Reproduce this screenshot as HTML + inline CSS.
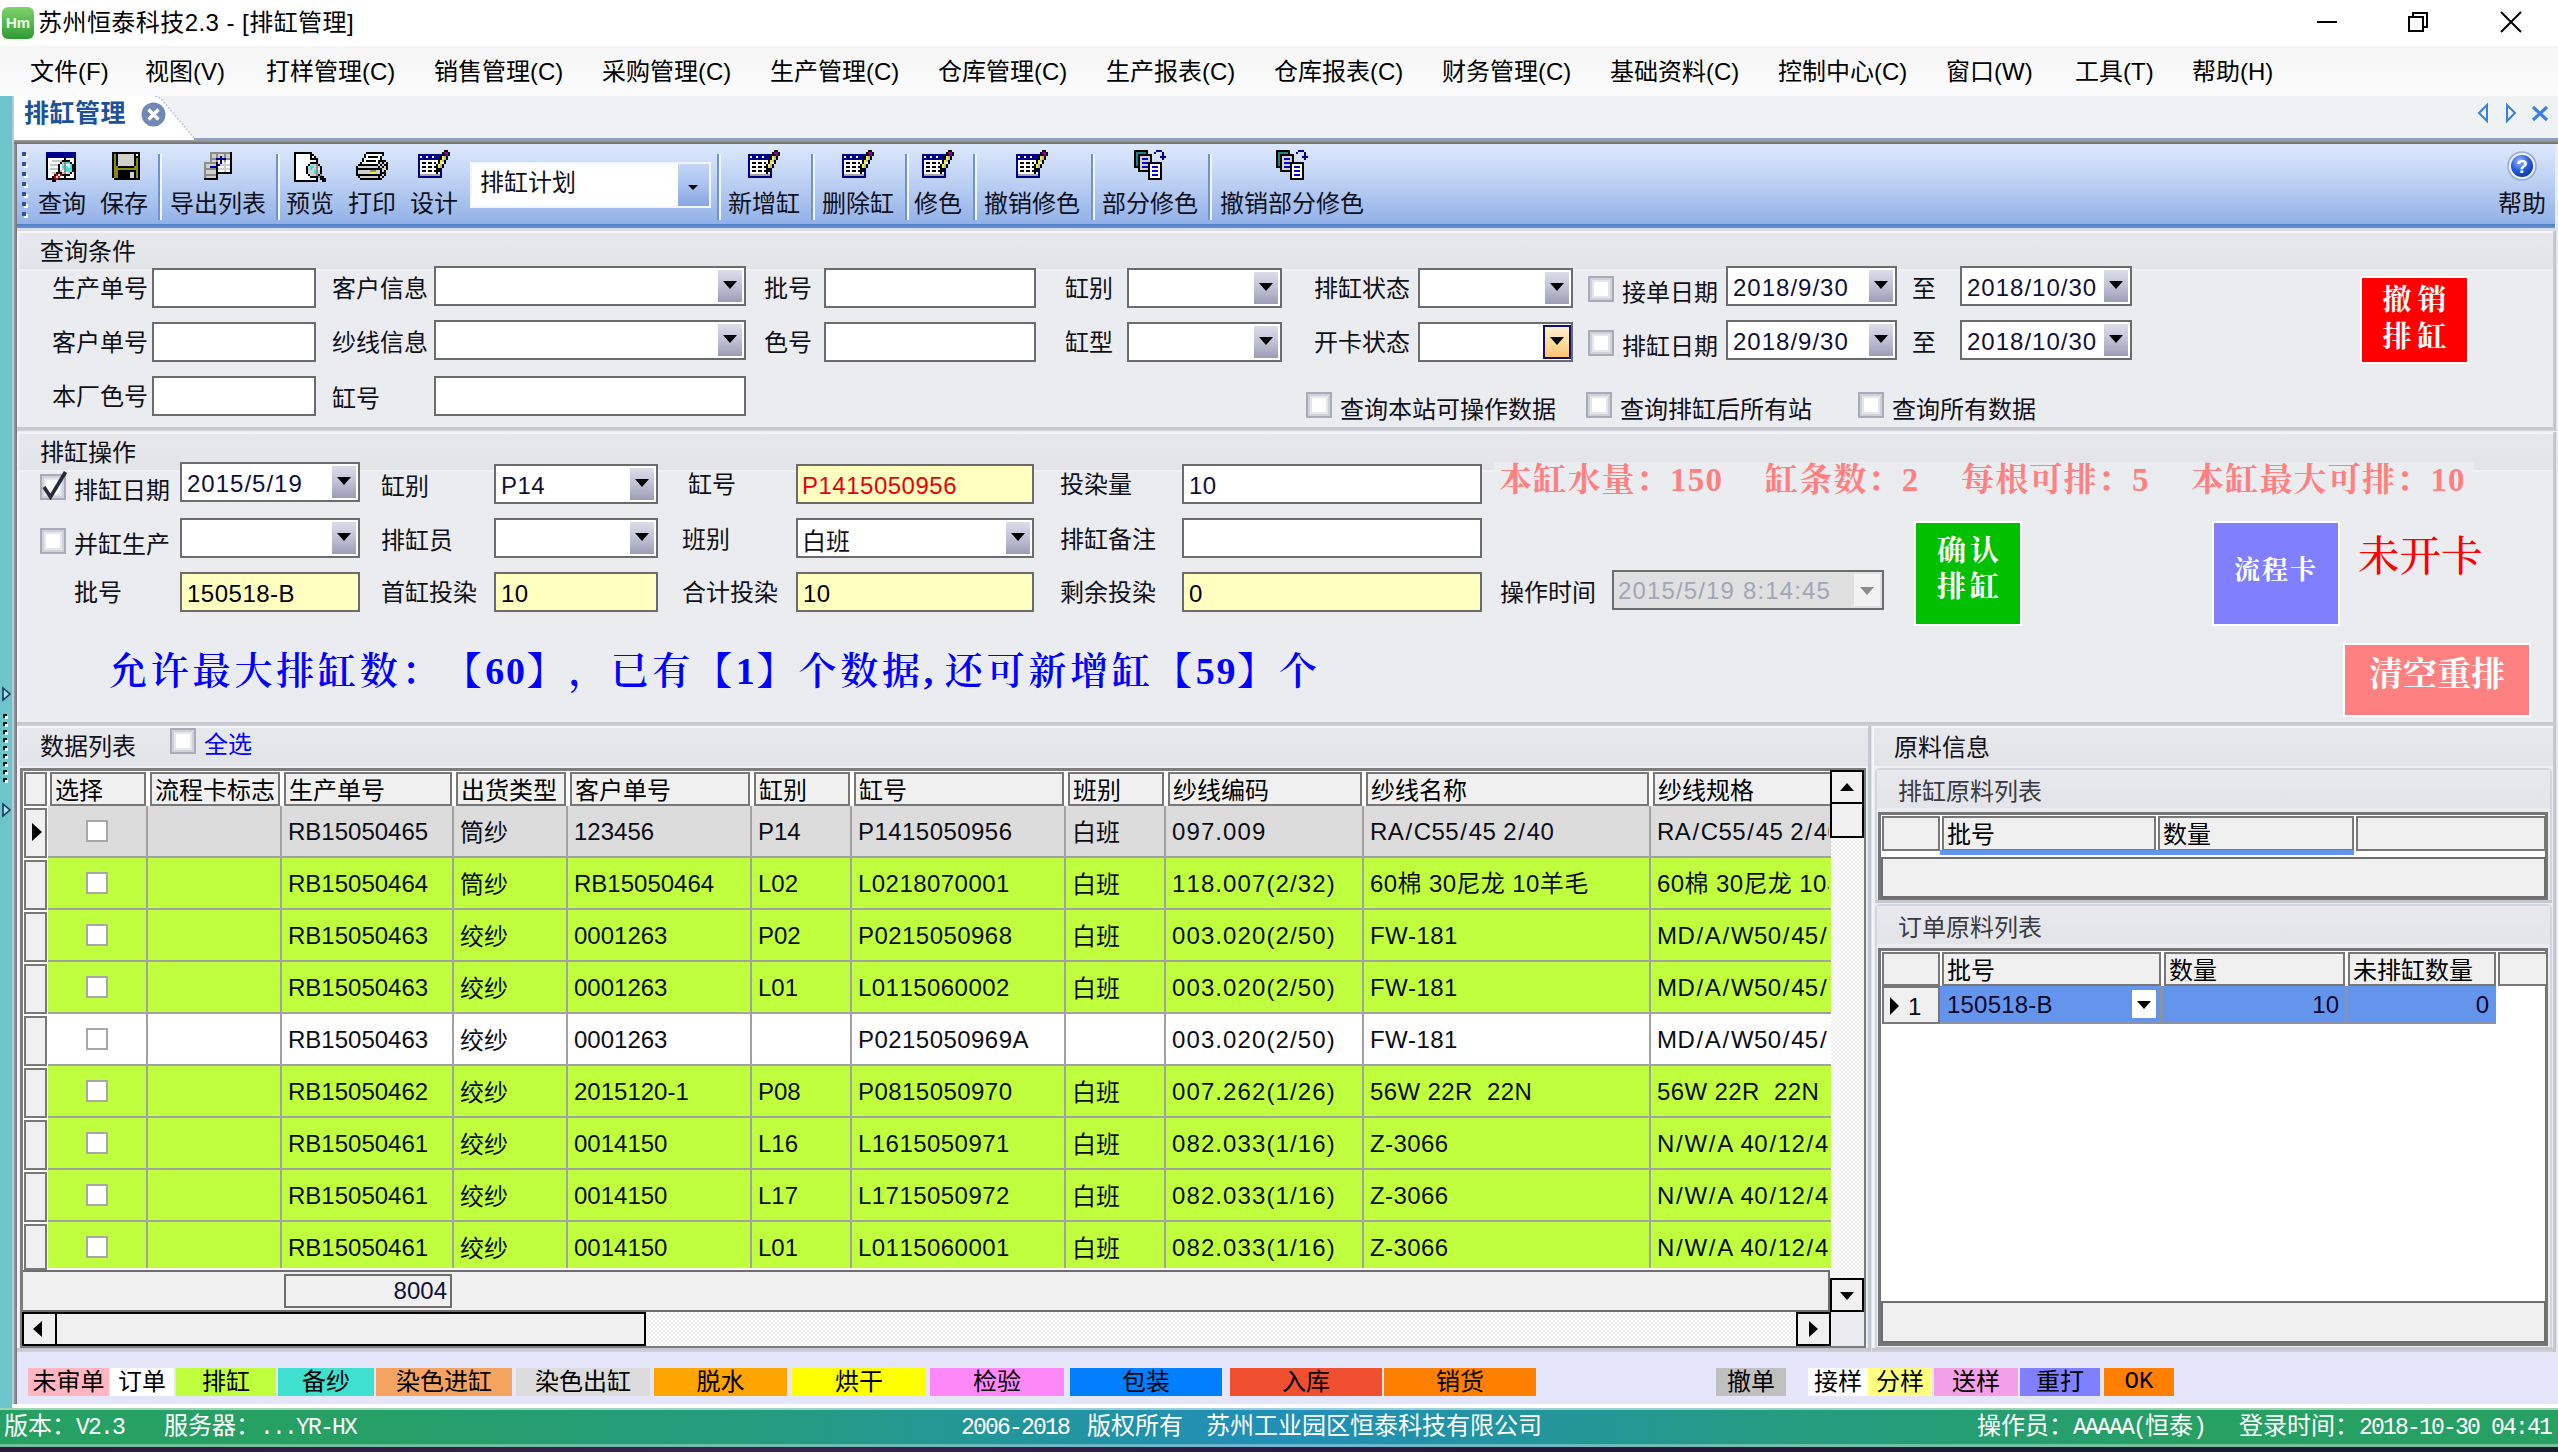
<!DOCTYPE html><html lang="zh-CN"><head><meta charset="utf-8"><title>排缸管理</title><style>
html,body{margin:0;padding:0}
body{width:2558px;height:1452px;position:relative;overflow:hidden;background:#ebecf0;
 font-family:"Liberation Sans","Noto Sans CJK SC",sans-serif;font-size:24px;color:#000;line-height:1;text-spacing-trim:space-all;font-kerning:none}
div,span,svg{position:absolute;box-sizing:border-box}
.t{white-space:pre;line-height:28px;height:28px;font-size:24px;color:#10101c}
.m{white-space:pre;line-height:28px;font-size:24px;color:#000}
.inp{background:#fff;border:2px solid #6c6c6c}
.yel{background:#ffffc0;border:2px solid #6c6c6c}
.cb{background:#fff;border:2px solid #a9acb8;box-shadow:inset 0 0 0 2px #cfd2da,inset 0 0 0 4px #e4e6ec}
.btn{background:linear-gradient(#dcdce9,#c4c4d8 45%,#9c9cb6);}
.arr{width:0;height:0;border-left:7px solid transparent;border-right:7px solid transparent;border-top:8px solid #000}
.v{white-space:pre;font-size:24px;line-height:28px;color:#10103a;letter-spacing:0.5px}
.hd{background:#f0f0f0;border:2px solid #777;}
.ht{white-space:pre;font-size:24px;line-height:28px;color:#000;margin-top:1px}
.c{white-space:pre;font-size:24px;line-height:28px;color:#0c0c14}
.lg{white-space:pre;font-size:24px;line-height:28px;text-align:center;color:#000}
.st{white-space:pre;font-size:24px;line-height:28px;color:#fff;margin-top:1px;font-family:"Liberation Mono","Noto Sans CJK SC",monospace}
.sep{width:3px;background:linear-gradient(90deg,#7f9bd0 0,#7f9bd0 1px,#eef4ff 1px,#eef4ff 3px)}
.tl{white-space:pre;font-size:24px;line-height:28px;color:#101018;margin-top:1px}
</style></head><body>
<div style="left:0px;top:0px;width:2558px;height:46px;background:#fff"></div>
<svg style="left:2px;top:7px" width="32" height="32" viewBox="0 0 32 32"><defs><linearGradient id="gi" x1="0" y1="0" x2="0" y2="1"><stop offset="0" stop-color="#7fd36b"/><stop offset="1" stop-color="#2f9a33"/></linearGradient></defs><rect x="0" y="0" width="32" height="32" rx="6" fill="url(#gi)"/><text x="16" y="21" font-family="Liberation Sans,sans-serif" font-size="15" font-weight="bold" text-anchor="middle" fill="#e8ffe6">Hm</text></svg>
<span class="m" style="left:38px;top:9px;font-size:24px;color:#000;letter-spacing:0.45px">苏州恒泰科技2.3 - [排缸管理]</span>
<div style="left:2317px;top:21px;width:20px;height:2px;background:#000"></div>
<svg style="left:2406px;top:10px" width="24" height="24" viewBox="0 0 24 24" fill="none" stroke="#000" stroke-width="2"><rect x="3" y="7" width="14" height="14"/><path d="M7 7V3h14v14h-4"/></svg>
<svg style="left:2500px;top:11px" width="22" height="22" viewBox="0 0 22 22" stroke="#000" stroke-width="2"><path d="M1 1L21 21M21 1L1 21"/></svg>
<div style="left:0px;top:46px;width:2558px;height:50px;background:linear-gradient(#f6f6f6,#fbfbfb)"></div>
<span class="m" style="left:30px;top:58px;">文件(F)</span>
<span class="m" style="left:145px;top:58px;">视图(V)</span>
<span class="m" style="left:266px;top:58px;">打样管理(C)</span>
<span class="m" style="left:434px;top:58px;">销售管理(C)</span>
<span class="m" style="left:602px;top:58px;">采购管理(C)</span>
<span class="m" style="left:770px;top:58px;">生产管理(C)</span>
<span class="m" style="left:938px;top:58px;">仓库管理(C)</span>
<span class="m" style="left:1106px;top:58px;">生产报表(C)</span>
<span class="m" style="left:1274px;top:58px;">仓库报表(C)</span>
<span class="m" style="left:1442px;top:58px;">财务管理(C)</span>
<span class="m" style="left:1610px;top:58px;">基础资料(C)</span>
<span class="m" style="left:1778px;top:58px;">控制中心(C)</span>
<span class="m" style="left:1946px;top:58px;">窗口(W)</span>
<span class="m" style="left:2075px;top:58px;">工具(T)</span>
<span class="m" style="left:2192px;top:58px;">帮助(H)</span>
<div style="left:0px;top:96px;width:2558px;height:44px;background:#eef2f3"></div>
<div style="left:0px;top:96px;width:12px;height:1312px;background:#6cc5ca"></div>
<div style="left:12px;top:96px;width:2px;height:1310px;background:#b4cdd6"></div>
<div style="left:14px;top:140px;width:3px;height:1264px;background:linear-gradient(90deg,#9a9aa2,#74747c)"></div>
<div style="left:12px;top:1404px;width:2546px;height:4px;background:#fff"></div>
<div style="left:192px;top:138px;width:2366px;height:2px;background:#8c9fc4"></div>
<svg style="left:14px;top:96px" width="190" height="46" viewBox="0 0 190 46"><path d="M0 44V0H141Q145 0 148 4L180 42V44Z" fill="#fff"/><path d="M141 0.5Q145 0.5 148 4L180 42" fill="none" stroke="#c3cbd9" stroke-width="1.6" stroke-dasharray="2 1.5"/></svg>
<span class="m" style="left:24px;top:99px;font-weight:bold;color:#1c5398;font-size:25px;letter-spacing:0.5px">排缸管理</span>
<svg style="left:141px;top:102px" width="25" height="25" viewBox="0 0 25 25"><circle cx="12.5" cy="12.5" r="12" fill="#7187b5"/><path d="M7.5 7.5L17.5 17.5M17.5 7.5L7.5 17.5" stroke="#fff" stroke-width="3.4"/></svg>
<svg style="left:2476px;top:102px" width="76" height="22" viewBox="0 0 76 22" fill="none" stroke="#3c7fdc" stroke-width="2"><path d="M11 3L3 11L11 19Z"/><path d="M31 3L39 11L31 19Z"/><path d="M57 5L71 18M71 5L57 18" stroke-width="3.2"/></svg>
<div style="left:14px;top:140px;width:2544px;height:4px;background:linear-gradient(#a4a4a6,#8a8a8c 40%,#6c6c6e)"></div>
<div style="left:17px;top:144px;width:2538px;height:82px;background:linear-gradient(#dce8fc 0%,#c5d7f6 35%,#a9c2ee 70%,#8fafe6 100%)"></div>
<div style="left:17px;top:224px;width:2538px;height:4px;background:linear-gradient(#4f7cc4,#6c94d6)"></div>
<div style="left:17px;top:228px;width:2541px;height:3px;background:#d9dde6"></div>
<div style="left:24px;top:154px;width:4px;height:4px;background:#f4f8ff"></div>
<div style="left:22px;top:152px;width:4px;height:4px;background:#34509a"></div>
<div style="left:24px;top:164px;width:4px;height:4px;background:#f4f8ff"></div>
<div style="left:22px;top:162px;width:4px;height:4px;background:#34509a"></div>
<div style="left:24px;top:174px;width:4px;height:4px;background:#f4f8ff"></div>
<div style="left:22px;top:172px;width:4px;height:4px;background:#34509a"></div>
<div style="left:24px;top:184px;width:4px;height:4px;background:#f4f8ff"></div>
<div style="left:22px;top:182px;width:4px;height:4px;background:#34509a"></div>
<div style="left:24px;top:194px;width:4px;height:4px;background:#f4f8ff"></div>
<div style="left:22px;top:192px;width:4px;height:4px;background:#34509a"></div>
<div style="left:24px;top:204px;width:4px;height:4px;background:#f4f8ff"></div>
<div style="left:22px;top:202px;width:4px;height:4px;background:#34509a"></div>
<div style="left:24px;top:214px;width:4px;height:4px;background:#f4f8ff"></div>
<div style="left:22px;top:212px;width:4px;height:4px;background:#34509a"></div>
<svg style="left:46px;top:152px" width="30" height="30" viewBox="0 0 30 30" shape-rendering="crispEdges" ><rect x="0" y="0" width="30" height="2" fill="#00008b"/><rect x="0" y="2" width="30" height="2" fill="#00008b"/><rect x="0" y="4" width="30" height="2" fill="#00008b"/><rect x="0" y="6" width="2" height="2" fill="#000"/><rect x="2" y="6" width="16" height="2" fill="#fff"/><rect x="18" y="6" width="2" height="2" fill="#000"/><rect x="20" y="6" width="8" height="2" fill="#fff"/><rect x="28" y="6" width="2" height="2" fill="#000"/><rect x="0" y="8" width="2" height="2" fill="#000"/><rect x="2" y="8" width="4" height="2" fill="#fff"/><rect x="6" y="8" width="10" height="2" fill="#c4c4c4"/><rect x="16" y="8" width="8" height="2" fill="#000"/><rect x="24" y="8" width="4" height="2" fill="#fff"/><rect x="28" y="8" width="2" height="2" fill="#000"/><rect x="0" y="10" width="2" height="2" fill="#000"/><rect x="2" y="10" width="12" height="2" fill="#fff"/><rect x="14" y="10" width="2" height="2" fill="#000"/><rect x="16" y="10" width="2" height="2" fill="#c4c4c4"/><rect x="18" y="10" width="2" height="2" fill="#8c8c8c"/><rect x="20" y="10" width="4" height="2" fill="#30e4e8"/><rect x="24" y="10" width="2" height="2" fill="#000"/><rect x="26" y="10" width="2" height="2" fill="#fff"/><rect x="28" y="10" width="2" height="2" fill="#000"/><rect x="0" y="12" width="2" height="2" fill="#000"/><rect x="2" y="12" width="2" height="2" fill="#fff"/><rect x="4" y="12" width="8" height="2" fill="#c4c4c4"/><rect x="12" y="12" width="2" height="2" fill="#000"/><rect x="14" y="12" width="2" height="2" fill="#fff"/><rect x="16" y="12" width="2" height="2" fill="#c4c4c4"/><rect x="18" y="12" width="2" height="2" fill="#8c8c8c"/><rect x="20" y="12" width="4" height="2" fill="#fff"/><rect x="24" y="12" width="2" height="2" fill="#30e4e8"/><rect x="26" y="12" width="4" height="2" fill="#000"/><rect x="0" y="14" width="2" height="2" fill="#000"/><rect x="2" y="14" width="10" height="2" fill="#fff"/><rect x="12" y="14" width="2" height="2" fill="#000"/><rect x="14" y="14" width="2" height="2" fill="#fff"/><rect x="16" y="14" width="2" height="2" fill="#30e4e8"/><rect x="18" y="14" width="2" height="2" fill="#8c8c8c"/><rect x="20" y="14" width="2" height="2" fill="#30e4e8"/><rect x="22" y="14" width="2" height="2" fill="#fff"/><rect x="24" y="14" width="2" height="2" fill="#30e4e8"/><rect x="26" y="14" width="4" height="2" fill="#000"/><rect x="0" y="16" width="2" height="2" fill="#000"/><rect x="2" y="16" width="2" height="2" fill="#fff"/><rect x="4" y="16" width="8" height="2" fill="#c4c4c4"/><rect x="12" y="16" width="2" height="2" fill="#000"/><rect x="14" y="16" width="2" height="2" fill="#fff"/><rect x="16" y="16" width="2" height="2" fill="#c4c4c4"/><rect x="18" y="16" width="2" height="2" fill="#8c8c8c"/><rect x="20" y="16" width="6" height="2" fill="#30e4e8"/><rect x="26" y="16" width="4" height="2" fill="#000"/><rect x="0" y="18" width="2" height="2" fill="#000"/><rect x="2" y="18" width="10" height="2" fill="#fff"/><rect x="12" y="18" width="2" height="2" fill="#000"/><rect x="14" y="18" width="2" height="2" fill="#c4c4c4"/><rect x="16" y="18" width="2" height="2" fill="#fff"/><rect x="18" y="18" width="2" height="2" fill="#8c8c8c"/><rect x="20" y="18" width="4" height="2" fill="#30e4e8"/><rect x="24" y="18" width="2" height="2" fill="#c4c4c4"/><rect x="26" y="18" width="4" height="2" fill="#000"/><rect x="0" y="20" width="2" height="2" fill="#000"/><rect x="2" y="20" width="4" height="2" fill="#fff"/><rect x="6" y="20" width="4" height="2" fill="#c4c4c4"/><rect x="10" y="20" width="2" height="2" fill="#000"/><rect x="12" y="20" width="2" height="2" fill="#7a0000"/><rect x="14" y="20" width="2" height="2" fill="#000"/><rect x="16" y="20" width="2" height="2" fill="#c4c4c4"/><rect x="18" y="20" width="2" height="2" fill="#8c8c8c"/><rect x="20" y="20" width="2" height="2" fill="#fff"/><rect x="22" y="20" width="2" height="2" fill="#c4c4c4"/><rect x="24" y="20" width="2" height="2" fill="#000"/><rect x="26" y="20" width="2" height="2" fill="#fff"/><rect x="28" y="20" width="2" height="2" fill="#000"/><rect x="0" y="22" width="2" height="2" fill="#000"/><rect x="2" y="22" width="6" height="2" fill="#fff"/><rect x="8" y="22" width="2" height="2" fill="#000"/><rect x="10" y="22" width="2" height="2" fill="#e00000"/><rect x="12" y="22" width="2" height="2" fill="#fff"/><rect x="14" y="22" width="2" height="2" fill="#e00000"/><rect x="16" y="22" width="8" height="2" fill="#000"/><rect x="24" y="22" width="4" height="2" fill="#fff"/><rect x="28" y="22" width="2" height="2" fill="#000"/><rect x="0" y="24" width="2" height="2" fill="#000"/><rect x="2" y="24" width="4" height="2" fill="#fff"/><rect x="6" y="24" width="2" height="2" fill="#000"/><rect x="8" y="24" width="2" height="2" fill="#e00000"/><rect x="10" y="24" width="2" height="2" fill="#fff"/><rect x="12" y="24" width="2" height="2" fill="#e00000"/><rect x="14" y="24" width="4" height="2" fill="#fff"/><rect x="18" y="24" width="2" height="2" fill="#000"/><rect x="20" y="24" width="8" height="2" fill="#fff"/><rect x="28" y="24" width="2" height="2" fill="#000"/><rect x="0" y="26" width="8" height="2" fill="#000"/><rect x="8" y="26" width="2" height="2" fill="#7a0000"/><rect x="10" y="26" width="2" height="2" fill="#e00000"/><rect x="12" y="26" width="18" height="2" fill="#000"/><rect x="6" y="28" width="4" height="2" fill="#000"/></svg>
<span class="tl" style="left:38px;top:188.5px;color:#10101c">查询</span>
<svg style="left:112px;top:152px" width="28" height="28" viewBox="0 0 28 28" shape-rendering="crispEdges" ><rect x="0" y="0" width="28" height="2" fill="#000"/><rect x="0" y="2" width="2" height="2" fill="#000"/><rect x="2" y="2" width="2" height="2" fill="#8a8a12"/><rect x="4" y="2" width="2" height="2" fill="#000"/><rect x="6" y="2" width="16" height="2" fill="#d2d0cc"/><rect x="22" y="2" width="2" height="2" fill="#000"/><rect x="24" y="2" width="2" height="2" fill="#fff"/><rect x="26" y="2" width="2" height="2" fill="#000"/><rect x="0" y="4" width="2" height="2" fill="#000"/><rect x="2" y="4" width="2" height="2" fill="#8a8a12"/><rect x="4" y="4" width="2" height="2" fill="#000"/><rect x="6" y="4" width="16" height="2" fill="#d2d0cc"/><rect x="22" y="4" width="6" height="2" fill="#000"/><rect x="0" y="6" width="2" height="2" fill="#000"/><rect x="2" y="6" width="2" height="2" fill="#8a8a12"/><rect x="4" y="6" width="2" height="2" fill="#000"/><rect x="6" y="6" width="16" height="2" fill="#d2d0cc"/><rect x="22" y="6" width="2" height="2" fill="#000"/><rect x="24" y="6" width="2" height="2" fill="#8a8a12"/><rect x="26" y="6" width="2" height="2" fill="#000"/><rect x="0" y="8" width="2" height="2" fill="#000"/><rect x="2" y="8" width="2" height="2" fill="#8a8a12"/><rect x="4" y="8" width="2" height="2" fill="#000"/><rect x="6" y="8" width="16" height="2" fill="#d2d0cc"/><rect x="22" y="8" width="2" height="2" fill="#000"/><rect x="24" y="8" width="2" height="2" fill="#8a8a12"/><rect x="26" y="8" width="2" height="2" fill="#000"/><rect x="0" y="10" width="2" height="2" fill="#000"/><rect x="2" y="10" width="2" height="2" fill="#8a8a12"/><rect x="4" y="10" width="2" height="2" fill="#000"/><rect x="6" y="10" width="16" height="2" fill="#d2d0cc"/><rect x="22" y="10" width="2" height="2" fill="#000"/><rect x="24" y="10" width="2" height="2" fill="#8a8a12"/><rect x="26" y="10" width="2" height="2" fill="#000"/><rect x="0" y="12" width="2" height="2" fill="#000"/><rect x="2" y="12" width="2" height="2" fill="#8a8a12"/><rect x="4" y="12" width="2" height="2" fill="#000"/><rect x="6" y="12" width="16" height="2" fill="#d2d0cc"/><rect x="22" y="12" width="2" height="2" fill="#000"/><rect x="24" y="12" width="2" height="2" fill="#8a8a12"/><rect x="26" y="12" width="2" height="2" fill="#000"/><rect x="0" y="14" width="2" height="2" fill="#000"/><rect x="2" y="14" width="4" height="2" fill="#8a8a12"/><rect x="6" y="14" width="16" height="2" fill="#000"/><rect x="22" y="14" width="4" height="2" fill="#8a8a12"/><rect x="26" y="14" width="2" height="2" fill="#000"/><rect x="0" y="16" width="2" height="2" fill="#000"/><rect x="2" y="16" width="24" height="2" fill="#8a8a12"/><rect x="26" y="16" width="2" height="2" fill="#000"/><rect x="0" y="18" width="2" height="2" fill="#000"/><rect x="2" y="18" width="4" height="2" fill="#8a8a12"/><rect x="6" y="18" width="18" height="2" fill="#000"/><rect x="24" y="18" width="2" height="2" fill="#8a8a12"/><rect x="26" y="18" width="2" height="2" fill="#000"/><rect x="0" y="20" width="2" height="2" fill="#000"/><rect x="2" y="20" width="4" height="2" fill="#8a8a12"/><rect x="6" y="20" width="12" height="2" fill="#000"/><rect x="18" y="20" width="4" height="2" fill="#d2d0cc"/><rect x="22" y="20" width="2" height="2" fill="#000"/><rect x="24" y="20" width="2" height="2" fill="#8a8a12"/><rect x="26" y="20" width="2" height="2" fill="#000"/><rect x="0" y="22" width="2" height="2" fill="#000"/><rect x="2" y="22" width="4" height="2" fill="#8a8a12"/><rect x="6" y="22" width="12" height="2" fill="#000"/><rect x="18" y="22" width="4" height="2" fill="#d2d0cc"/><rect x="22" y="22" width="2" height="2" fill="#000"/><rect x="24" y="22" width="2" height="2" fill="#8a8a12"/><rect x="26" y="22" width="2" height="2" fill="#000"/><rect x="0" y="24" width="2" height="2" fill="#000"/><rect x="2" y="24" width="4" height="2" fill="#8a8a12"/><rect x="6" y="24" width="12" height="2" fill="#000"/><rect x="18" y="24" width="4" height="2" fill="#d2d0cc"/><rect x="22" y="24" width="2" height="2" fill="#000"/><rect x="24" y="24" width="2" height="2" fill="#8a8a12"/><rect x="26" y="24" width="2" height="2" fill="#000"/><rect x="2" y="26" width="26" height="2" fill="#000"/></svg>
<span class="tl" style="left:100px;top:188.5px;color:#10101c">保存</span>
<div style="left:158px;top:154px;width:4px;height:66px;background:linear-gradient(90deg,#6f92d2 0,#6f92d2 2px,#f2f6ff 2px,#f2f6ff 4px)"></div>
<svg style="left:204px;top:152px" width="28" height="28" viewBox="0 0 28 28" shape-rendering="crispEdges" ><rect x="6" y="0" width="20" height="2" fill="#8c8c8c"/><rect x="26" y="0" width="2" height="2" fill="#000"/><rect x="6" y="2" width="2" height="2" fill="#8c8c8c"/><rect x="8" y="2" width="4" height="2" fill="#d2d0cc"/><rect x="12" y="2" width="2" height="2" fill="#8c8c8c"/><rect x="14" y="2" width="6" height="2" fill="#d2d0cc"/><rect x="20" y="2" width="2" height="2" fill="#8c8c8c"/><rect x="22" y="2" width="4" height="2" fill="#d2d0cc"/><rect x="26" y="2" width="2" height="2" fill="#000"/><rect x="6" y="4" width="2" height="2" fill="#8c8c8c"/><rect x="8" y="4" width="4" height="2" fill="#d2d0cc"/><rect x="12" y="4" width="2" height="2" fill="#8c8c8c"/><rect x="14" y="4" width="2" height="2" fill="#d2d0cc"/><rect x="16" y="4" width="2" height="2" fill="#00008b"/><rect x="18" y="4" width="2" height="2" fill="#d2d0cc"/><rect x="20" y="4" width="2" height="2" fill="#8c8c8c"/><rect x="22" y="4" width="4" height="2" fill="#d2d0cc"/><rect x="26" y="4" width="2" height="2" fill="#000"/><rect x="6" y="6" width="6" height="2" fill="#8c8c8c"/><rect x="12" y="6" width="10" height="2" fill="#00008b"/><rect x="22" y="6" width="4" height="2" fill="#8c8c8c"/><rect x="26" y="6" width="2" height="2" fill="#000"/><rect x="6" y="8" width="2" height="2" fill="#8c8c8c"/><rect x="8" y="8" width="4" height="2" fill="#d2d0cc"/><rect x="12" y="8" width="2" height="2" fill="#8c8c8c"/><rect x="14" y="8" width="2" height="2" fill="#fff"/><rect x="16" y="8" width="2" height="2" fill="#00008b"/><rect x="18" y="8" width="2" height="2" fill="#fff"/><rect x="20" y="8" width="2" height="2" fill="#8c8c8c"/><rect x="22" y="8" width="4" height="2" fill="#fff"/><rect x="26" y="8" width="2" height="2" fill="#000"/><rect x="0" y="10" width="12" height="2" fill="#8c8c8c"/><rect x="12" y="10" width="2" height="2" fill="#000"/><rect x="14" y="10" width="2" height="2" fill="#fff"/><rect x="16" y="10" width="2" height="2" fill="#00008b"/><rect x="18" y="10" width="2" height="2" fill="#fff"/><rect x="20" y="10" width="2" height="2" fill="#d2d0cc"/><rect x="22" y="10" width="4" height="2" fill="#fff"/><rect x="26" y="10" width="2" height="2" fill="#000"/><rect x="0" y="12" width="2" height="2" fill="#8c8c8c"/><rect x="2" y="12" width="10" height="2" fill="#d2d0cc"/><rect x="12" y="12" width="2" height="2" fill="#000"/><rect x="14" y="12" width="2" height="2" fill="#00008b"/><rect x="16" y="12" width="10" height="2" fill="#d2d0cc"/><rect x="26" y="12" width="2" height="2" fill="#000"/><rect x="0" y="14" width="2" height="2" fill="#8c8c8c"/><rect x="2" y="14" width="4" height="2" fill="#d2d0cc"/><rect x="6" y="14" width="8" height="2" fill="#00008b"/><rect x="14" y="14" width="6" height="2" fill="#fff"/><rect x="20" y="14" width="2" height="2" fill="#d2d0cc"/><rect x="22" y="14" width="4" height="2" fill="#fff"/><rect x="26" y="14" width="2" height="2" fill="#000"/><rect x="0" y="16" width="12" height="2" fill="#8c8c8c"/><rect x="12" y="16" width="2" height="2" fill="#000"/><rect x="14" y="16" width="12" height="2" fill="#d2d0cc"/><rect x="26" y="16" width="2" height="2" fill="#000"/><rect x="0" y="18" width="2" height="2" fill="#8c8c8c"/><rect x="2" y="18" width="10" height="2" fill="#d2d0cc"/><rect x="12" y="18" width="2" height="2" fill="#000"/><rect x="14" y="18" width="6" height="2" fill="#fff"/><rect x="20" y="18" width="2" height="2" fill="#d2d0cc"/><rect x="22" y="18" width="4" height="2" fill="#fff"/><rect x="26" y="18" width="2" height="2" fill="#000"/><rect x="0" y="20" width="2" height="2" fill="#8c8c8c"/><rect x="2" y="20" width="10" height="2" fill="#d2d0cc"/><rect x="12" y="20" width="16" height="2" fill="#000"/><rect x="0" y="22" width="12" height="2" fill="#8c8c8c"/><rect x="12" y="22" width="2" height="2" fill="#000"/><rect x="0" y="24" width="2" height="2" fill="#8c8c8c"/><rect x="2" y="24" width="10" height="2" fill="#d2d0cc"/><rect x="12" y="24" width="2" height="2" fill="#000"/><rect x="0" y="26" width="14" height="2" fill="#000"/></svg>
<span class="tl" style="left:170px;top:188.5px;color:#10101c">导出列表</span>
<div style="left:276px;top:154px;width:4px;height:66px;background:linear-gradient(90deg,#6f92d2 0,#6f92d2 2px,#f2f6ff 2px,#f2f6ff 4px)"></div>
<svg style="left:294px;top:152px" width="32" height="30" viewBox="0 0 32 30" shape-rendering="crispEdges" ><rect x="0" y="0" width="18" height="2" fill="#000"/><rect x="0" y="2" width="2" height="2" fill="#000"/><rect x="2" y="2" width="14" height="2" fill="#fff"/><rect x="16" y="2" width="4" height="2" fill="#000"/><rect x="0" y="4" width="2" height="2" fill="#000"/><rect x="2" y="4" width="14" height="2" fill="#fff"/><rect x="16" y="4" width="2" height="2" fill="#000"/><rect x="18" y="4" width="2" height="2" fill="#fff"/><rect x="20" y="4" width="2" height="2" fill="#000"/><rect x="0" y="6" width="2" height="2" fill="#000"/><rect x="2" y="6" width="14" height="2" fill="#fff"/><rect x="16" y="6" width="8" height="2" fill="#000"/><rect x="0" y="8" width="2" height="2" fill="#000"/><rect x="2" y="8" width="20" height="2" fill="#fff"/><rect x="22" y="8" width="2" height="2" fill="#000"/><rect x="0" y="10" width="2" height="2" fill="#000"/><rect x="2" y="10" width="14" height="2" fill="#fff"/><rect x="16" y="10" width="8" height="2" fill="#000"/><rect x="0" y="12" width="2" height="2" fill="#000"/><rect x="2" y="12" width="12" height="2" fill="#fff"/><rect x="14" y="12" width="2" height="2" fill="#000"/><rect x="16" y="12" width="6" height="2" fill="#d2d0cc"/><rect x="22" y="12" width="2" height="2" fill="#8c8c8c"/><rect x="24" y="12" width="2" height="2" fill="#000"/><rect x="0" y="14" width="2" height="2" fill="#000"/><rect x="2" y="14" width="10" height="2" fill="#fff"/><rect x="12" y="14" width="2" height="2" fill="#000"/><rect x="14" y="14" width="2" height="2" fill="#d2d0cc"/><rect x="16" y="14" width="4" height="2" fill="#30e4e8"/><rect x="20" y="14" width="2" height="2" fill="#d2d0cc"/><rect x="22" y="14" width="2" height="2" fill="#8c8c8c"/><rect x="24" y="14" width="2" height="2" fill="#d2d0cc"/><rect x="26" y="14" width="2" height="2" fill="#000"/><rect x="0" y="16" width="2" height="2" fill="#000"/><rect x="2" y="16" width="10" height="2" fill="#fff"/><rect x="12" y="16" width="2" height="2" fill="#000"/><rect x="14" y="16" width="2" height="2" fill="#d2d0cc"/><rect x="16" y="16" width="2" height="2" fill="#30e4e8"/><rect x="18" y="16" width="4" height="2" fill="#d2d0cc"/><rect x="22" y="16" width="2" height="2" fill="#8c8c8c"/><rect x="24" y="16" width="2" height="2" fill="#fff"/><rect x="26" y="16" width="2" height="2" fill="#000"/><rect x="0" y="18" width="2" height="2" fill="#000"/><rect x="2" y="18" width="10" height="2" fill="#fff"/><rect x="12" y="18" width="2" height="2" fill="#000"/><rect x="14" y="18" width="6" height="2" fill="#d2d0cc"/><rect x="20" y="18" width="2" height="2" fill="#30e4e8"/><rect x="22" y="18" width="2" height="2" fill="#8c8c8c"/><rect x="24" y="18" width="2" height="2" fill="#d2d0cc"/><rect x="26" y="18" width="2" height="2" fill="#000"/><rect x="0" y="20" width="2" height="2" fill="#000"/><rect x="2" y="20" width="10" height="2" fill="#fff"/><rect x="12" y="20" width="2" height="2" fill="#000"/><rect x="14" y="20" width="6" height="2" fill="#d2d0cc"/><rect x="20" y="20" width="2" height="2" fill="#30e4e8"/><rect x="22" y="20" width="2" height="2" fill="#8c8c8c"/><rect x="24" y="20" width="2" height="2" fill="#d2d0cc"/><rect x="26" y="20" width="2" height="2" fill="#000"/><rect x="0" y="22" width="2" height="2" fill="#000"/><rect x="2" y="22" width="12" height="2" fill="#fff"/><rect x="14" y="22" width="2" height="2" fill="#000"/><rect x="16" y="22" width="6" height="2" fill="#d2d0cc"/><rect x="22" y="22" width="2" height="2" fill="#8c8c8c"/><rect x="24" y="22" width="2" height="2" fill="#000"/><rect x="26" y="22" width="2" height="2" fill="#8c8c8c"/><rect x="0" y="24" width="2" height="2" fill="#000"/><rect x="2" y="24" width="14" height="2" fill="#fff"/><rect x="16" y="24" width="8" height="2" fill="#000"/><rect x="24" y="24" width="2" height="2" fill="#8c8c8c"/><rect x="26" y="24" width="4" height="2" fill="#000"/><rect x="0" y="26" width="2" height="2" fill="#000"/><rect x="2" y="26" width="20" height="2" fill="#fff"/><rect x="22" y="26" width="2" height="2" fill="#000"/><rect x="26" y="26" width="6" height="2" fill="#000"/><rect x="0" y="28" width="24" height="2" fill="#000"/><rect x="28" y="28" width="4" height="2" fill="#000"/></svg>
<span class="tl" style="left:286px;top:188.5px;color:#10101c">预览</span>
<svg style="left:356px;top:152px" width="32" height="28" viewBox="0 0 32 28" shape-rendering="crispEdges" ><rect x="10" y="0" width="18" height="2" fill="#000"/><rect x="8" y="2" width="2" height="2" fill="#000"/><rect x="10" y="2" width="16" height="2" fill="#fff"/><rect x="26" y="2" width="2" height="2" fill="#000"/><rect x="8" y="4" width="2" height="2" fill="#000"/><rect x="10" y="4" width="2" height="2" fill="#fff"/><rect x="12" y="4" width="10" height="2" fill="#000"/><rect x="22" y="4" width="2" height="2" fill="#fff"/><rect x="24" y="4" width="2" height="2" fill="#000"/><rect x="6" y="6" width="2" height="2" fill="#000"/><rect x="8" y="6" width="16" height="2" fill="#fff"/><rect x="24" y="6" width="2" height="2" fill="#000"/><rect x="6" y="8" width="2" height="2" fill="#000"/><rect x="8" y="8" width="2" height="2" fill="#fff"/><rect x="10" y="8" width="10" height="2" fill="#000"/><rect x="20" y="8" width="2" height="2" fill="#fff"/><rect x="22" y="8" width="8" height="2" fill="#000"/><rect x="4" y="10" width="2" height="2" fill="#000"/><rect x="6" y="10" width="16" height="2" fill="#fff"/><rect x="22" y="10" width="2" height="2" fill="#000"/><rect x="24" y="10" width="2" height="2" fill="#d2d0cc"/><rect x="26" y="10" width="2" height="2" fill="#000"/><rect x="28" y="10" width="2" height="2" fill="#d2d0cc"/><rect x="30" y="10" width="2" height="2" fill="#000"/><rect x="2" y="12" width="20" height="2" fill="#000"/><rect x="22" y="12" width="2" height="2" fill="#d2d0cc"/><rect x="24" y="12" width="2" height="2" fill="#000"/><rect x="26" y="12" width="2" height="2" fill="#d2d0cc"/><rect x="28" y="12" width="4" height="2" fill="#000"/><rect x="0" y="14" width="2" height="2" fill="#000"/><rect x="2" y="14" width="20" height="2" fill="#d2d0cc"/><rect x="22" y="14" width="2" height="2" fill="#000"/><rect x="24" y="14" width="2" height="2" fill="#d2d0cc"/><rect x="26" y="14" width="2" height="2" fill="#000"/><rect x="28" y="14" width="2" height="2" fill="#d2d0cc"/><rect x="30" y="14" width="2" height="2" fill="#000"/><rect x="0" y="16" width="26" height="2" fill="#000"/><rect x="26" y="16" width="4" height="2" fill="#d2d0cc"/><rect x="30" y="16" width="2" height="2" fill="#000"/><rect x="0" y="18" width="2" height="2" fill="#000"/><rect x="2" y="18" width="12" height="2" fill="#d2d0cc"/><rect x="14" y="18" width="6" height="2" fill="#8c8c8c"/><rect x="20" y="18" width="4" height="2" fill="#d2d0cc"/><rect x="24" y="18" width="2" height="2" fill="#000"/><rect x="26" y="18" width="2" height="2" fill="#d2d0cc"/><rect x="28" y="18" width="2" height="2" fill="#000"/><rect x="0" y="20" width="2" height="2" fill="#000"/><rect x="2" y="20" width="12" height="2" fill="#d2d0cc"/><rect x="14" y="20" width="6" height="2" fill="#f4f020"/><rect x="20" y="20" width="4" height="2" fill="#d2d0cc"/><rect x="24" y="20" width="6" height="2" fill="#000"/><rect x="0" y="22" width="26" height="2" fill="#000"/><rect x="26" y="22" width="2" height="2" fill="#d2d0cc"/><rect x="28" y="22" width="2" height="2" fill="#000"/><rect x="2" y="24" width="2" height="2" fill="#000"/><rect x="4" y="24" width="18" height="2" fill="#d2d0cc"/><rect x="22" y="24" width="2" height="2" fill="#000"/><rect x="24" y="24" width="2" height="2" fill="#d2d0cc"/><rect x="26" y="24" width="2" height="2" fill="#000"/><rect x="4" y="26" width="22" height="2" fill="#000"/></svg>
<span class="tl" style="left:348px;top:188.5px;color:#10101c">打印</span>
<svg style="left:418px;top:150px" width="32" height="28" viewBox="0 0 32 28" shape-rendering="crispEdges" ><rect x="26" y="0" width="4" height="2" fill="#000"/><rect x="24" y="2" width="2" height="2" fill="#000"/><rect x="26" y="2" width="4" height="2" fill="#900090"/><rect x="30" y="2" width="2" height="2" fill="#000"/><rect x="0" y="4" width="24" height="2" fill="#00008b"/><rect x="24" y="4" width="4" height="2" fill="#000"/><rect x="28" y="4" width="2" height="2" fill="#900090"/><rect x="30" y="4" width="2" height="2" fill="#000"/><rect x="0" y="6" width="2" height="2" fill="#00008b"/><rect x="2" y="6" width="2" height="2" fill="#fff"/><rect x="4" y="6" width="4" height="2" fill="#00008b"/><rect x="8" y="6" width="2" height="2" fill="#fff"/><rect x="10" y="6" width="4" height="2" fill="#00008b"/><rect x="14" y="6" width="2" height="2" fill="#fff"/><rect x="16" y="6" width="6" height="2" fill="#00008b"/><rect x="22" y="6" width="2" height="2" fill="#000"/><rect x="24" y="6" width="2" height="2" fill="#f8f020"/><rect x="26" y="6" width="2" height="2" fill="#b4b4b4"/><rect x="28" y="6" width="2" height="2" fill="#000"/><rect x="0" y="8" width="22" height="2" fill="#00008b"/><rect x="22" y="8" width="2" height="2" fill="#000"/><rect x="24" y="8" width="2" height="2" fill="#f8f020"/><rect x="26" y="8" width="2" height="2" fill="#b4b4b4"/><rect x="28" y="8" width="2" height="2" fill="#000"/><rect x="0" y="10" width="2" height="2" fill="#00008b"/><rect x="2" y="10" width="18" height="2" fill="#fff"/><rect x="20" y="10" width="2" height="2" fill="#000"/><rect x="22" y="10" width="2" height="2" fill="#f8f020"/><rect x="24" y="10" width="2" height="2" fill="#b4b4b4"/><rect x="26" y="10" width="2" height="2" fill="#000"/><rect x="0" y="12" width="2" height="2" fill="#00008b"/><rect x="2" y="12" width="2" height="2" fill="#fff"/><rect x="4" y="12" width="4" height="2" fill="#000"/><rect x="8" y="12" width="2" height="2" fill="#fff"/><rect x="10" y="12" width="4" height="2" fill="#000"/><rect x="14" y="12" width="2" height="2" fill="#fff"/><rect x="16" y="12" width="2" height="2" fill="#000"/><rect x="18" y="12" width="2" height="2" fill="#fff"/><rect x="20" y="12" width="2" height="2" fill="#000"/><rect x="22" y="12" width="2" height="2" fill="#f8f020"/><rect x="24" y="12" width="2" height="2" fill="#fff"/><rect x="26" y="12" width="2" height="2" fill="#000"/><rect x="0" y="14" width="2" height="2" fill="#00008b"/><rect x="2" y="14" width="16" height="2" fill="#fff"/><rect x="18" y="14" width="2" height="2" fill="#000"/><rect x="20" y="14" width="2" height="2" fill="#f8f020"/><rect x="22" y="14" width="2" height="2" fill="#b4b4b4"/><rect x="24" y="14" width="2" height="2" fill="#000"/><rect x="0" y="16" width="2" height="2" fill="#00008b"/><rect x="2" y="16" width="2" height="2" fill="#fff"/><rect x="4" y="16" width="4" height="2" fill="#000"/><rect x="8" y="16" width="2" height="2" fill="#fff"/><rect x="10" y="16" width="4" height="2" fill="#000"/><rect x="14" y="16" width="2" height="2" fill="#fff"/><rect x="16" y="16" width="4" height="2" fill="#000"/><rect x="20" y="16" width="2" height="2" fill="#f8f020"/><rect x="22" y="16" width="2" height="2" fill="#b4b4b4"/><rect x="24" y="16" width="2" height="2" fill="#000"/><rect x="0" y="18" width="2" height="2" fill="#00008b"/><rect x="2" y="18" width="16" height="2" fill="#fff"/><rect x="18" y="18" width="6" height="2" fill="#000"/><rect x="0" y="20" width="2" height="2" fill="#00008b"/><rect x="2" y="20" width="2" height="2" fill="#fff"/><rect x="4" y="20" width="4" height="2" fill="#000"/><rect x="8" y="20" width="2" height="2" fill="#fff"/><rect x="10" y="20" width="4" height="2" fill="#000"/><rect x="14" y="20" width="2" height="2" fill="#fff"/><rect x="16" y="20" width="6" height="2" fill="#000"/><rect x="22" y="20" width="2" height="2" fill="#00008b"/><rect x="0" y="22" width="2" height="2" fill="#00008b"/><rect x="2" y="22" width="16" height="2" fill="#fff"/><rect x="18" y="22" width="2" height="2" fill="#000"/><rect x="20" y="22" width="2" height="2" fill="#fff"/><rect x="22" y="22" width="2" height="2" fill="#00008b"/><rect x="0" y="24" width="2" height="2" fill="#00008b"/><rect x="2" y="24" width="20" height="2" fill="#a4a4a4"/><rect x="22" y="24" width="2" height="2" fill="#00008b"/><rect x="0" y="26" width="24" height="2" fill="#00008b"/></svg>
<span class="tl" style="left:410px;top:188.5px;color:#10101c">设计</span>
<div style="left:470px;top:162px;width:241px;height:46px;background:#fff;border:2px solid #f2f6fd"></div>
<span class="tl" style="left:480px;top:167.5px;color:#10101c">排缸计划</span>
<div style="left:678px;top:164px;width:31px;height:42px;background:linear-gradient(#c4d6f6,#a9c2ef 50%,#86a7e2)"></div>
<div class="arr" style="left:688px;top:185px;width:10px;height:5px;border-left-width:5px;border-right-width:5px;border-top-width:5px"></div>
<div style="left:717px;top:154px;width:4px;height:66px;background:linear-gradient(90deg,#6f92d2 0,#6f92d2 2px,#f2f6ff 2px,#f2f6ff 4px)"></div>
<svg style="left:748px;top:150px" width="32" height="28" viewBox="0 0 32 28" shape-rendering="crispEdges" ><rect x="26" y="0" width="4" height="2" fill="#000"/><rect x="24" y="2" width="2" height="2" fill="#000"/><rect x="26" y="2" width="4" height="2" fill="#900090"/><rect x="30" y="2" width="2" height="2" fill="#000"/><rect x="0" y="4" width="24" height="2" fill="#00008b"/><rect x="24" y="4" width="4" height="2" fill="#000"/><rect x="28" y="4" width="2" height="2" fill="#900090"/><rect x="30" y="4" width="2" height="2" fill="#000"/><rect x="0" y="6" width="2" height="2" fill="#00008b"/><rect x="2" y="6" width="2" height="2" fill="#fff"/><rect x="4" y="6" width="4" height="2" fill="#00008b"/><rect x="8" y="6" width="2" height="2" fill="#fff"/><rect x="10" y="6" width="4" height="2" fill="#00008b"/><rect x="14" y="6" width="2" height="2" fill="#fff"/><rect x="16" y="6" width="6" height="2" fill="#00008b"/><rect x="22" y="6" width="2" height="2" fill="#000"/><rect x="24" y="6" width="2" height="2" fill="#f8f020"/><rect x="26" y="6" width="2" height="2" fill="#b4b4b4"/><rect x="28" y="6" width="2" height="2" fill="#000"/><rect x="0" y="8" width="22" height="2" fill="#00008b"/><rect x="22" y="8" width="2" height="2" fill="#000"/><rect x="24" y="8" width="2" height="2" fill="#f8f020"/><rect x="26" y="8" width="2" height="2" fill="#b4b4b4"/><rect x="28" y="8" width="2" height="2" fill="#000"/><rect x="0" y="10" width="2" height="2" fill="#00008b"/><rect x="2" y="10" width="18" height="2" fill="#fff"/><rect x="20" y="10" width="2" height="2" fill="#000"/><rect x="22" y="10" width="2" height="2" fill="#f8f020"/><rect x="24" y="10" width="2" height="2" fill="#b4b4b4"/><rect x="26" y="10" width="2" height="2" fill="#000"/><rect x="0" y="12" width="2" height="2" fill="#00008b"/><rect x="2" y="12" width="2" height="2" fill="#fff"/><rect x="4" y="12" width="4" height="2" fill="#000"/><rect x="8" y="12" width="2" height="2" fill="#fff"/><rect x="10" y="12" width="4" height="2" fill="#000"/><rect x="14" y="12" width="2" height="2" fill="#fff"/><rect x="16" y="12" width="2" height="2" fill="#000"/><rect x="18" y="12" width="2" height="2" fill="#fff"/><rect x="20" y="12" width="2" height="2" fill="#000"/><rect x="22" y="12" width="2" height="2" fill="#f8f020"/><rect x="24" y="12" width="2" height="2" fill="#fff"/><rect x="26" y="12" width="2" height="2" fill="#000"/><rect x="0" y="14" width="2" height="2" fill="#00008b"/><rect x="2" y="14" width="16" height="2" fill="#fff"/><rect x="18" y="14" width="2" height="2" fill="#000"/><rect x="20" y="14" width="2" height="2" fill="#f8f020"/><rect x="22" y="14" width="2" height="2" fill="#b4b4b4"/><rect x="24" y="14" width="2" height="2" fill="#000"/><rect x="0" y="16" width="2" height="2" fill="#00008b"/><rect x="2" y="16" width="2" height="2" fill="#fff"/><rect x="4" y="16" width="4" height="2" fill="#000"/><rect x="8" y="16" width="2" height="2" fill="#fff"/><rect x="10" y="16" width="4" height="2" fill="#000"/><rect x="14" y="16" width="2" height="2" fill="#fff"/><rect x="16" y="16" width="4" height="2" fill="#000"/><rect x="20" y="16" width="2" height="2" fill="#f8f020"/><rect x="22" y="16" width="2" height="2" fill="#b4b4b4"/><rect x="24" y="16" width="2" height="2" fill="#000"/><rect x="0" y="18" width="2" height="2" fill="#00008b"/><rect x="2" y="18" width="16" height="2" fill="#fff"/><rect x="18" y="18" width="6" height="2" fill="#000"/><rect x="0" y="20" width="2" height="2" fill="#00008b"/><rect x="2" y="20" width="2" height="2" fill="#fff"/><rect x="4" y="20" width="4" height="2" fill="#000"/><rect x="8" y="20" width="2" height="2" fill="#fff"/><rect x="10" y="20" width="4" height="2" fill="#000"/><rect x="14" y="20" width="2" height="2" fill="#fff"/><rect x="16" y="20" width="6" height="2" fill="#000"/><rect x="22" y="20" width="2" height="2" fill="#00008b"/><rect x="0" y="22" width="2" height="2" fill="#00008b"/><rect x="2" y="22" width="16" height="2" fill="#fff"/><rect x="18" y="22" width="2" height="2" fill="#000"/><rect x="20" y="22" width="2" height="2" fill="#fff"/><rect x="22" y="22" width="2" height="2" fill="#00008b"/><rect x="0" y="24" width="2" height="2" fill="#00008b"/><rect x="2" y="24" width="20" height="2" fill="#a4a4a4"/><rect x="22" y="24" width="2" height="2" fill="#00008b"/><rect x="0" y="26" width="24" height="2" fill="#00008b"/></svg>
<span class="tl" style="left:728px;top:188.5px;color:#10101c">新增缸</span>
<div style="left:811px;top:154px;width:4px;height:66px;background:linear-gradient(90deg,#6f92d2 0,#6f92d2 2px,#f2f6ff 2px,#f2f6ff 4px)"></div>
<svg style="left:842px;top:150px" width="32" height="28" viewBox="0 0 32 28" shape-rendering="crispEdges" ><rect x="26" y="0" width="4" height="2" fill="#000"/><rect x="24" y="2" width="2" height="2" fill="#000"/><rect x="26" y="2" width="4" height="2" fill="#900090"/><rect x="30" y="2" width="2" height="2" fill="#000"/><rect x="0" y="4" width="24" height="2" fill="#00008b"/><rect x="24" y="4" width="4" height="2" fill="#000"/><rect x="28" y="4" width="2" height="2" fill="#900090"/><rect x="30" y="4" width="2" height="2" fill="#000"/><rect x="0" y="6" width="2" height="2" fill="#00008b"/><rect x="2" y="6" width="2" height="2" fill="#fff"/><rect x="4" y="6" width="4" height="2" fill="#00008b"/><rect x="8" y="6" width="2" height="2" fill="#fff"/><rect x="10" y="6" width="4" height="2" fill="#00008b"/><rect x="14" y="6" width="2" height="2" fill="#fff"/><rect x="16" y="6" width="6" height="2" fill="#00008b"/><rect x="22" y="6" width="2" height="2" fill="#000"/><rect x="24" y="6" width="2" height="2" fill="#f8f020"/><rect x="26" y="6" width="2" height="2" fill="#b4b4b4"/><rect x="28" y="6" width="2" height="2" fill="#000"/><rect x="0" y="8" width="22" height="2" fill="#00008b"/><rect x="22" y="8" width="2" height="2" fill="#000"/><rect x="24" y="8" width="2" height="2" fill="#f8f020"/><rect x="26" y="8" width="2" height="2" fill="#b4b4b4"/><rect x="28" y="8" width="2" height="2" fill="#000"/><rect x="0" y="10" width="2" height="2" fill="#00008b"/><rect x="2" y="10" width="18" height="2" fill="#fff"/><rect x="20" y="10" width="2" height="2" fill="#000"/><rect x="22" y="10" width="2" height="2" fill="#f8f020"/><rect x="24" y="10" width="2" height="2" fill="#b4b4b4"/><rect x="26" y="10" width="2" height="2" fill="#000"/><rect x="0" y="12" width="2" height="2" fill="#00008b"/><rect x="2" y="12" width="2" height="2" fill="#fff"/><rect x="4" y="12" width="4" height="2" fill="#000"/><rect x="8" y="12" width="2" height="2" fill="#fff"/><rect x="10" y="12" width="4" height="2" fill="#000"/><rect x="14" y="12" width="2" height="2" fill="#fff"/><rect x="16" y="12" width="2" height="2" fill="#000"/><rect x="18" y="12" width="2" height="2" fill="#fff"/><rect x="20" y="12" width="2" height="2" fill="#000"/><rect x="22" y="12" width="2" height="2" fill="#f8f020"/><rect x="24" y="12" width="2" height="2" fill="#fff"/><rect x="26" y="12" width="2" height="2" fill="#000"/><rect x="0" y="14" width="2" height="2" fill="#00008b"/><rect x="2" y="14" width="16" height="2" fill="#fff"/><rect x="18" y="14" width="2" height="2" fill="#000"/><rect x="20" y="14" width="2" height="2" fill="#f8f020"/><rect x="22" y="14" width="2" height="2" fill="#b4b4b4"/><rect x="24" y="14" width="2" height="2" fill="#000"/><rect x="0" y="16" width="2" height="2" fill="#00008b"/><rect x="2" y="16" width="2" height="2" fill="#fff"/><rect x="4" y="16" width="4" height="2" fill="#000"/><rect x="8" y="16" width="2" height="2" fill="#fff"/><rect x="10" y="16" width="4" height="2" fill="#000"/><rect x="14" y="16" width="2" height="2" fill="#fff"/><rect x="16" y="16" width="4" height="2" fill="#000"/><rect x="20" y="16" width="2" height="2" fill="#f8f020"/><rect x="22" y="16" width="2" height="2" fill="#b4b4b4"/><rect x="24" y="16" width="2" height="2" fill="#000"/><rect x="0" y="18" width="2" height="2" fill="#00008b"/><rect x="2" y="18" width="16" height="2" fill="#fff"/><rect x="18" y="18" width="6" height="2" fill="#000"/><rect x="0" y="20" width="2" height="2" fill="#00008b"/><rect x="2" y="20" width="2" height="2" fill="#fff"/><rect x="4" y="20" width="4" height="2" fill="#000"/><rect x="8" y="20" width="2" height="2" fill="#fff"/><rect x="10" y="20" width="4" height="2" fill="#000"/><rect x="14" y="20" width="2" height="2" fill="#fff"/><rect x="16" y="20" width="6" height="2" fill="#000"/><rect x="22" y="20" width="2" height="2" fill="#00008b"/><rect x="0" y="22" width="2" height="2" fill="#00008b"/><rect x="2" y="22" width="16" height="2" fill="#fff"/><rect x="18" y="22" width="2" height="2" fill="#000"/><rect x="20" y="22" width="2" height="2" fill="#fff"/><rect x="22" y="22" width="2" height="2" fill="#00008b"/><rect x="0" y="24" width="2" height="2" fill="#00008b"/><rect x="2" y="24" width="20" height="2" fill="#a4a4a4"/><rect x="22" y="24" width="2" height="2" fill="#00008b"/><rect x="0" y="26" width="24" height="2" fill="#00008b"/></svg>
<span class="tl" style="left:822px;top:188.5px;color:#10101c">删除缸</span>
<div style="left:905px;top:154px;width:4px;height:66px;background:linear-gradient(90deg,#6f92d2 0,#6f92d2 2px,#f2f6ff 2px,#f2f6ff 4px)"></div>
<svg style="left:922px;top:150px" width="32" height="28" viewBox="0 0 32 28" shape-rendering="crispEdges" ><rect x="26" y="0" width="4" height="2" fill="#000"/><rect x="24" y="2" width="2" height="2" fill="#000"/><rect x="26" y="2" width="4" height="2" fill="#900090"/><rect x="30" y="2" width="2" height="2" fill="#000"/><rect x="0" y="4" width="24" height="2" fill="#00008b"/><rect x="24" y="4" width="4" height="2" fill="#000"/><rect x="28" y="4" width="2" height="2" fill="#900090"/><rect x="30" y="4" width="2" height="2" fill="#000"/><rect x="0" y="6" width="2" height="2" fill="#00008b"/><rect x="2" y="6" width="2" height="2" fill="#fff"/><rect x="4" y="6" width="4" height="2" fill="#00008b"/><rect x="8" y="6" width="2" height="2" fill="#fff"/><rect x="10" y="6" width="4" height="2" fill="#00008b"/><rect x="14" y="6" width="2" height="2" fill="#fff"/><rect x="16" y="6" width="6" height="2" fill="#00008b"/><rect x="22" y="6" width="2" height="2" fill="#000"/><rect x="24" y="6" width="2" height="2" fill="#f8f020"/><rect x="26" y="6" width="2" height="2" fill="#b4b4b4"/><rect x="28" y="6" width="2" height="2" fill="#000"/><rect x="0" y="8" width="22" height="2" fill="#00008b"/><rect x="22" y="8" width="2" height="2" fill="#000"/><rect x="24" y="8" width="2" height="2" fill="#f8f020"/><rect x="26" y="8" width="2" height="2" fill="#b4b4b4"/><rect x="28" y="8" width="2" height="2" fill="#000"/><rect x="0" y="10" width="2" height="2" fill="#00008b"/><rect x="2" y="10" width="18" height="2" fill="#fff"/><rect x="20" y="10" width="2" height="2" fill="#000"/><rect x="22" y="10" width="2" height="2" fill="#f8f020"/><rect x="24" y="10" width="2" height="2" fill="#b4b4b4"/><rect x="26" y="10" width="2" height="2" fill="#000"/><rect x="0" y="12" width="2" height="2" fill="#00008b"/><rect x="2" y="12" width="2" height="2" fill="#fff"/><rect x="4" y="12" width="4" height="2" fill="#000"/><rect x="8" y="12" width="2" height="2" fill="#fff"/><rect x="10" y="12" width="4" height="2" fill="#000"/><rect x="14" y="12" width="2" height="2" fill="#fff"/><rect x="16" y="12" width="2" height="2" fill="#000"/><rect x="18" y="12" width="2" height="2" fill="#fff"/><rect x="20" y="12" width="2" height="2" fill="#000"/><rect x="22" y="12" width="2" height="2" fill="#f8f020"/><rect x="24" y="12" width="2" height="2" fill="#fff"/><rect x="26" y="12" width="2" height="2" fill="#000"/><rect x="0" y="14" width="2" height="2" fill="#00008b"/><rect x="2" y="14" width="16" height="2" fill="#fff"/><rect x="18" y="14" width="2" height="2" fill="#000"/><rect x="20" y="14" width="2" height="2" fill="#f8f020"/><rect x="22" y="14" width="2" height="2" fill="#b4b4b4"/><rect x="24" y="14" width="2" height="2" fill="#000"/><rect x="0" y="16" width="2" height="2" fill="#00008b"/><rect x="2" y="16" width="2" height="2" fill="#fff"/><rect x="4" y="16" width="4" height="2" fill="#000"/><rect x="8" y="16" width="2" height="2" fill="#fff"/><rect x="10" y="16" width="4" height="2" fill="#000"/><rect x="14" y="16" width="2" height="2" fill="#fff"/><rect x="16" y="16" width="4" height="2" fill="#000"/><rect x="20" y="16" width="2" height="2" fill="#f8f020"/><rect x="22" y="16" width="2" height="2" fill="#b4b4b4"/><rect x="24" y="16" width="2" height="2" fill="#000"/><rect x="0" y="18" width="2" height="2" fill="#00008b"/><rect x="2" y="18" width="16" height="2" fill="#fff"/><rect x="18" y="18" width="6" height="2" fill="#000"/><rect x="0" y="20" width="2" height="2" fill="#00008b"/><rect x="2" y="20" width="2" height="2" fill="#fff"/><rect x="4" y="20" width="4" height="2" fill="#000"/><rect x="8" y="20" width="2" height="2" fill="#fff"/><rect x="10" y="20" width="4" height="2" fill="#000"/><rect x="14" y="20" width="2" height="2" fill="#fff"/><rect x="16" y="20" width="6" height="2" fill="#000"/><rect x="22" y="20" width="2" height="2" fill="#00008b"/><rect x="0" y="22" width="2" height="2" fill="#00008b"/><rect x="2" y="22" width="16" height="2" fill="#fff"/><rect x="18" y="22" width="2" height="2" fill="#000"/><rect x="20" y="22" width="2" height="2" fill="#fff"/><rect x="22" y="22" width="2" height="2" fill="#00008b"/><rect x="0" y="24" width="2" height="2" fill="#00008b"/><rect x="2" y="24" width="20" height="2" fill="#a4a4a4"/><rect x="22" y="24" width="2" height="2" fill="#00008b"/><rect x="0" y="26" width="24" height="2" fill="#00008b"/></svg>
<span class="tl" style="left:914px;top:188.5px;color:#10101c">修色</span>
<div style="left:973px;top:154px;width:4px;height:66px;background:linear-gradient(90deg,#6f92d2 0,#6f92d2 2px,#f2f6ff 2px,#f2f6ff 4px)"></div>
<svg style="left:1016px;top:150px" width="32" height="28" viewBox="0 0 32 28" shape-rendering="crispEdges" ><rect x="26" y="0" width="4" height="2" fill="#000"/><rect x="24" y="2" width="2" height="2" fill="#000"/><rect x="26" y="2" width="4" height="2" fill="#900090"/><rect x="30" y="2" width="2" height="2" fill="#000"/><rect x="0" y="4" width="24" height="2" fill="#00008b"/><rect x="24" y="4" width="4" height="2" fill="#000"/><rect x="28" y="4" width="2" height="2" fill="#900090"/><rect x="30" y="4" width="2" height="2" fill="#000"/><rect x="0" y="6" width="2" height="2" fill="#00008b"/><rect x="2" y="6" width="2" height="2" fill="#fff"/><rect x="4" y="6" width="4" height="2" fill="#00008b"/><rect x="8" y="6" width="2" height="2" fill="#fff"/><rect x="10" y="6" width="4" height="2" fill="#00008b"/><rect x="14" y="6" width="2" height="2" fill="#fff"/><rect x="16" y="6" width="6" height="2" fill="#00008b"/><rect x="22" y="6" width="2" height="2" fill="#000"/><rect x="24" y="6" width="2" height="2" fill="#f8f020"/><rect x="26" y="6" width="2" height="2" fill="#b4b4b4"/><rect x="28" y="6" width="2" height="2" fill="#000"/><rect x="0" y="8" width="22" height="2" fill="#00008b"/><rect x="22" y="8" width="2" height="2" fill="#000"/><rect x="24" y="8" width="2" height="2" fill="#f8f020"/><rect x="26" y="8" width="2" height="2" fill="#b4b4b4"/><rect x="28" y="8" width="2" height="2" fill="#000"/><rect x="0" y="10" width="2" height="2" fill="#00008b"/><rect x="2" y="10" width="18" height="2" fill="#fff"/><rect x="20" y="10" width="2" height="2" fill="#000"/><rect x="22" y="10" width="2" height="2" fill="#f8f020"/><rect x="24" y="10" width="2" height="2" fill="#b4b4b4"/><rect x="26" y="10" width="2" height="2" fill="#000"/><rect x="0" y="12" width="2" height="2" fill="#00008b"/><rect x="2" y="12" width="2" height="2" fill="#fff"/><rect x="4" y="12" width="4" height="2" fill="#000"/><rect x="8" y="12" width="2" height="2" fill="#fff"/><rect x="10" y="12" width="4" height="2" fill="#000"/><rect x="14" y="12" width="2" height="2" fill="#fff"/><rect x="16" y="12" width="2" height="2" fill="#000"/><rect x="18" y="12" width="2" height="2" fill="#fff"/><rect x="20" y="12" width="2" height="2" fill="#000"/><rect x="22" y="12" width="2" height="2" fill="#f8f020"/><rect x="24" y="12" width="2" height="2" fill="#fff"/><rect x="26" y="12" width="2" height="2" fill="#000"/><rect x="0" y="14" width="2" height="2" fill="#00008b"/><rect x="2" y="14" width="16" height="2" fill="#fff"/><rect x="18" y="14" width="2" height="2" fill="#000"/><rect x="20" y="14" width="2" height="2" fill="#f8f020"/><rect x="22" y="14" width="2" height="2" fill="#b4b4b4"/><rect x="24" y="14" width="2" height="2" fill="#000"/><rect x="0" y="16" width="2" height="2" fill="#00008b"/><rect x="2" y="16" width="2" height="2" fill="#fff"/><rect x="4" y="16" width="4" height="2" fill="#000"/><rect x="8" y="16" width="2" height="2" fill="#fff"/><rect x="10" y="16" width="4" height="2" fill="#000"/><rect x="14" y="16" width="2" height="2" fill="#fff"/><rect x="16" y="16" width="4" height="2" fill="#000"/><rect x="20" y="16" width="2" height="2" fill="#f8f020"/><rect x="22" y="16" width="2" height="2" fill="#b4b4b4"/><rect x="24" y="16" width="2" height="2" fill="#000"/><rect x="0" y="18" width="2" height="2" fill="#00008b"/><rect x="2" y="18" width="16" height="2" fill="#fff"/><rect x="18" y="18" width="6" height="2" fill="#000"/><rect x="0" y="20" width="2" height="2" fill="#00008b"/><rect x="2" y="20" width="2" height="2" fill="#fff"/><rect x="4" y="20" width="4" height="2" fill="#000"/><rect x="8" y="20" width="2" height="2" fill="#fff"/><rect x="10" y="20" width="4" height="2" fill="#000"/><rect x="14" y="20" width="2" height="2" fill="#fff"/><rect x="16" y="20" width="6" height="2" fill="#000"/><rect x="22" y="20" width="2" height="2" fill="#00008b"/><rect x="0" y="22" width="2" height="2" fill="#00008b"/><rect x="2" y="22" width="16" height="2" fill="#fff"/><rect x="18" y="22" width="2" height="2" fill="#000"/><rect x="20" y="22" width="2" height="2" fill="#fff"/><rect x="22" y="22" width="2" height="2" fill="#00008b"/><rect x="0" y="24" width="2" height="2" fill="#00008b"/><rect x="2" y="24" width="20" height="2" fill="#a4a4a4"/><rect x="22" y="24" width="2" height="2" fill="#00008b"/><rect x="0" y="26" width="24" height="2" fill="#00008b"/></svg>
<span class="tl" style="left:984px;top:188.5px;color:#10101c">撤销修色</span>
<div style="left:1091px;top:154px;width:4px;height:66px;background:linear-gradient(90deg,#6f92d2 0,#6f92d2 2px,#f2f6ff 2px,#f2f6ff 4px)"></div>
<svg style="left:1134px;top:150px" width="32" height="30" viewBox="0 0 32 30" shape-rendering="crispEdges" ><rect x="0" y="0" width="14" height="18" fill="#000"/><rect x="2" y="2" width="10" height="14" fill="#208484"/><rect x="4" y="4" width="14" height="18" fill="#000"/><rect x="6" y="6" width="10" height="14" fill="#d4d0c8"/><rect x="8" y="8" width="6" height="2" fill="#0000d8"/><rect x="8" y="12" width="6" height="2" fill="#0000d8"/><rect x="8" y="16" width="6" height="2" fill="#0000d8"/><rect x="14" y="12" width="14" height="18" fill="#000"/><rect x="16" y="14" width="10" height="14" fill="#fff"/><rect x="18" y="16" width="6" height="2" fill="#0000d8"/><rect x="18" y="20" width="6" height="2" fill="#0000d8"/><rect x="18" y="24" width="6" height="2" fill="#0000d8"/><rect x="22" y="0" width="6" height="2" fill="#00008b"/><rect x="20" y="2" width="2" height="2" fill="#00008b"/><rect x="28" y="2" width="2" height="8" fill="#00008b"/><rect x="26" y="6" width="6" height="2" fill="#00008b"/></svg>
<span class="tl" style="left:1102px;top:188.5px;color:#10101c">部分修色</span>
<div style="left:1208px;top:154px;width:4px;height:66px;background:linear-gradient(90deg,#6f92d2 0,#6f92d2 2px,#f2f6ff 2px,#f2f6ff 4px)"></div>
<svg style="left:1276px;top:150px" width="32" height="30" viewBox="0 0 32 30" shape-rendering="crispEdges" ><rect x="0" y="0" width="14" height="18" fill="#000"/><rect x="2" y="2" width="10" height="14" fill="#208484"/><rect x="4" y="4" width="14" height="18" fill="#000"/><rect x="6" y="6" width="10" height="14" fill="#d4d0c8"/><rect x="8" y="8" width="6" height="2" fill="#0000d8"/><rect x="8" y="12" width="6" height="2" fill="#0000d8"/><rect x="8" y="16" width="6" height="2" fill="#0000d8"/><rect x="14" y="12" width="14" height="18" fill="#000"/><rect x="16" y="14" width="10" height="14" fill="#fff"/><rect x="18" y="16" width="6" height="2" fill="#0000d8"/><rect x="18" y="20" width="6" height="2" fill="#0000d8"/><rect x="18" y="24" width="6" height="2" fill="#0000d8"/><rect x="22" y="0" width="6" height="2" fill="#00008b"/><rect x="20" y="2" width="2" height="2" fill="#00008b"/><rect x="28" y="2" width="2" height="8" fill="#00008b"/><rect x="26" y="6" width="6" height="2" fill="#00008b"/></svg>
<span class="tl" style="left:1220px;top:188.5px;color:#10101c">撤销部分修色</span>
<svg style="left:2507px;top:151px" width="30" height="30" viewBox="0 0 30 30"><defs><radialGradient id="hg" cx="0.4" cy="0.3" r="0.8"><stop offset="0" stop-color="#9ec0ff"/><stop offset="0.5" stop-color="#2a5fe0"/><stop offset="1" stop-color="#0a2a9a"/></radialGradient></defs><circle cx="15" cy="15" r="14" fill="#e8eefc" stroke="#9aa8d0" stroke-width="1.5"/><circle cx="15" cy="15" r="11" fill="url(#hg)"/><text x="15" y="22" font-family="Liberation Sans,sans-serif" font-weight="bold" font-size="19" text-anchor="middle" fill="#fff">?</text></svg>
<span class="tl" style="left:2498px;top:188.5px;color:#10101c">帮助</span>
<div style="left:17px;top:231px;width:2540px;height:200px;background:#ebecf0;border-top:2px solid #f4f5f8;border-left:2px solid #f4f5f8"></div>
<div style="left:19px;top:233px;width:2538px;height:36px;background:linear-gradient(#e7e8ec,#e3e4e8)"></div>
<div style="left:19px;top:269px;width:2538px;height:2px;background:#f0f1f4"></div>
<div style="left:17px;top:427px;width:2540px;height:4px;background:linear-gradient(#c3c5cc,#d0d2d8)"></div>
<div style="left:2553px;top:231px;width:3px;height:200px;background:linear-gradient(90deg,#cbcdd4,#bfc1c9)"></div>
<div style="left:2556px;top:231px;width:1px;height:200px;background:#e4e5ea"></div>
<span class="tl" style="left:40px;top:237px;">查询条件</span>
<span class="tl" style="left:52px;top:274px;">生产单号</span>
<div class="inp" style="left:152px;top:268px;width:164px;height:40px;"></div>
<span class="tl" style="left:52px;top:328px;">客户单号</span>
<div class="inp" style="left:152px;top:322px;width:164px;height:40px;"></div>
<span class="tl" style="left:52px;top:382px;">本厂色号</span>
<div class="inp" style="left:152px;top:376px;width:164px;height:40px;"></div>
<span class="tl" style="left:332px;top:274px;">客户信息</span>
<div class="inp" style="left:434px;top:266px;width:312px;height:40px;"></div>
<div class="btn" style="left:718px;top:270px;width:24px;height:32px;"></div>
<div class="arr" style="left:723px;top:281px;width:14px;height:8px;"></div>
<span class="tl" style="left:332px;top:328px;">纱线信息</span>
<div class="inp" style="left:434px;top:320px;width:312px;height:40px;"></div>
<div class="btn" style="left:718px;top:324px;width:24px;height:32px;"></div>
<div class="arr" style="left:723px;top:335px;width:14px;height:8px;"></div>
<span class="tl" style="left:332px;top:384px;">缸号</span>
<div class="inp" style="left:434px;top:376px;width:312px;height:40px;"></div>
<span class="tl" style="left:764px;top:274px;">批号</span>
<div class="inp" style="left:824px;top:268px;width:212px;height:40px;"></div>
<span class="tl" style="left:764px;top:328px;">色号</span>
<div class="inp" style="left:824px;top:322px;width:212px;height:40px;"></div>
<span class="tl" style="left:1065px;top:274px;">缸别</span>
<div class="inp" style="left:1127px;top:268px;width:155px;height:40px;"></div>
<div class="btn" style="left:1254px;top:272px;width:24px;height:32px;"></div>
<div class="arr" style="left:1259px;top:283px;width:14px;height:8px;"></div>
<span class="tl" style="left:1065px;top:328px;">缸型</span>
<div class="inp" style="left:1127px;top:322px;width:155px;height:40px;"></div>
<div class="btn" style="left:1254px;top:326px;width:24px;height:32px;"></div>
<div class="arr" style="left:1259px;top:337px;width:14px;height:8px;"></div>
<span class="tl" style="left:1314px;top:274px;">排缸状态</span>
<div class="inp" style="left:1418px;top:268px;width:155px;height:40px;"></div>
<div class="btn" style="left:1545px;top:272px;width:24px;height:32px;"></div>
<div class="arr" style="left:1550px;top:283px;width:14px;height:8px;"></div>
<span class="tl" style="left:1314px;top:328px;">开卡状态</span>
<div class="inp" style="left:1418px;top:322px;width:155px;height:40px;"></div>
<div style="left:1543px;top:325px;width:28px;height:34px;background:linear-gradient(#fff0d0,#ffd898 60%,#ffc470);border:2px solid #10106a"></div>
<div class="arr" style="left:1550px;top:337px;width:14px;height:8px;"></div>
<div class="cb" style="left:1588px;top:276px;width:26px;height:26px;"></div>
<span class="tl" style="left:1622px;top:278px;">接单日期</span>
<div class="inp" style="left:1726px;top:266px;width:171px;height:40px;"></div>
<div class="btn" style="left:1869px;top:270px;width:24px;height:32px;"></div>
<div class="arr" style="left:1874px;top:281px;width:14px;height:8px;"></div>
<span class="v" style="left:1733px;top:274px;letter-spacing:1px">2018/9/30</span>
<div class="cb" style="left:1588px;top:330px;width:26px;height:26px;"></div>
<span class="tl" style="left:1622px;top:332px;">排缸日期</span>
<div class="inp" style="left:1726px;top:320px;width:171px;height:40px;"></div>
<div class="btn" style="left:1869px;top:324px;width:24px;height:32px;"></div>
<div class="arr" style="left:1874px;top:335px;width:14px;height:8px;"></div>
<span class="v" style="left:1733px;top:328px;letter-spacing:1px">2018/9/30</span>
<span class="tl" style="left:1912px;top:274px;">至</span>
<div class="inp" style="left:1960px;top:266px;width:172px;height:40px;"></div>
<div class="btn" style="left:2104px;top:270px;width:24px;height:32px;"></div>
<div class="arr" style="left:2109px;top:281px;width:14px;height:8px;"></div>
<span class="v" style="left:1967px;top:274px;letter-spacing:1px">2018/10/30</span>
<span class="tl" style="left:1912px;top:328px;">至</span>
<div class="inp" style="left:1960px;top:320px;width:172px;height:40px;"></div>
<div class="btn" style="left:2104px;top:324px;width:24px;height:32px;"></div>
<div class="arr" style="left:2109px;top:335px;width:14px;height:8px;"></div>
<span class="v" style="left:1967px;top:328px;letter-spacing:1px">2018/10/30</span>
<div class="cb" style="left:1306px;top:392px;width:26px;height:26px;"></div>
<span class="tl" style="left:1340px;top:395px;">查询本站可操作数据</span>
<div class="cb" style="left:1586px;top:392px;width:26px;height:26px;"></div>
<span class="tl" style="left:1620px;top:395px;">查询排缸后所有站</span>
<div class="cb" style="left:1858px;top:392px;width:26px;height:26px;"></div>
<span class="tl" style="left:1892px;top:395px;">查询所有数据</span>
<div style="left:2360px;top:276px;width:109px;height:88px;background:#ff0000;border:2px solid #fff"></div>
<div style="left:2360px;top:282px;width:109px;height:80px;font-family:'Liberation Serif','Noto Serif CJK SC',serif;font-weight:700;font-size:29px;line-height:37px;color:#fff;text-align:center;letter-spacing:6px;padding-left:6px">撤销<br>排缸</div>
<div style="left:17px;top:432px;width:2540px;height:294px;background:#ebecf0;border-top:2px solid #f4f5f8;border-left:2px solid #f4f5f8"></div>
<div style="left:19px;top:434px;width:2538px;height:36px;background:linear-gradient(#e7e8ec,#e3e4e8)"></div>
<div style="left:19px;top:470px;width:2538px;height:2px;background:#f0f1f4"></div>
<div style="left:17px;top:722px;width:2540px;height:4px;background:linear-gradient(#c3c5cc,#d0d2d8)"></div>
<div style="left:2553px;top:432px;width:3px;height:294px;background:linear-gradient(90deg,#cbcdd4,#bfc1c9)"></div>
<div style="left:2556px;top:432px;width:1px;height:294px;background:#e4e5ea"></div>
<span class="tl" style="left:40px;top:438px;">排缸操作</span>
<div class="cb" style="left:40px;top:474px;width:26px;height:26px;"></div>
<svg style="left:40px;top:468px" width="30" height="32" viewBox="0 0 30 32"><path d="M4 19L10.5 29L25.5 4" fill="none" stroke="#2a2a3c" stroke-width="3.6"/></svg>
<span class="tl" style="left:74px;top:476px;">排缸日期</span>
<div class="inp" style="left:180px;top:462px;width:180px;height:40px;"></div>
<div class="btn" style="left:332px;top:466px;width:24px;height:32px;"></div>
<div class="arr" style="left:337px;top:477px;width:14px;height:8px;"></div>
<span class="v" style="left:187px;top:470px;letter-spacing:1px">2015/5/19</span>
<div class="cb" style="left:40px;top:528px;width:26px;height:26px;"></div>
<span class="tl" style="left:74px;top:530px;">并缸生产</span>
<div class="inp" style="left:180px;top:518px;width:180px;height:40px;"></div>
<div class="btn" style="left:332px;top:522px;width:24px;height:32px;"></div>
<div class="arr" style="left:337px;top:533px;width:14px;height:8px;"></div>
<span class="tl" style="left:74px;top:578px;">批号</span>
<div class="yel" style="left:180px;top:572px;width:180px;height:40px;"></div>
<span class="v" style="left:187px;top:580px;color:#000">150518-B</span>
<span class="tl" style="left:381px;top:472px;">缸别</span>
<div class="inp" style="left:494px;top:464px;width:164px;height:40px;"></div>
<div class="btn" style="left:630px;top:468px;width:24px;height:32px;"></div>
<div class="arr" style="left:635px;top:479px;width:14px;height:8px;"></div>
<span class="v" style="left:501px;top:472px;">P14</span>
<span class="tl" style="left:381px;top:526px;">排缸员</span>
<div class="inp" style="left:494px;top:518px;width:164px;height:40px;"></div>
<div class="btn" style="left:630px;top:522px;width:24px;height:32px;"></div>
<div class="arr" style="left:635px;top:533px;width:14px;height:8px;"></div>
<span class="tl" style="left:381px;top:578px;">首缸投染</span>
<div class="yel" style="left:494px;top:572px;width:164px;height:40px;"></div>
<span class="v" style="left:501px;top:580px;color:#000">10</span>
<span class="tl" style="left:688px;top:470px;">缸号</span>
<div class="yel" style="left:796px;top:464px;width:238px;height:40px;"></div>
<span class="v" style="left:802px;top:472px;color:#e8000c">P1415050956</span>
<span class="tl" style="left:682px;top:525px;">班别</span>
<div class="inp" style="left:796px;top:518px;width:238px;height:40px;"></div>
<div class="btn" style="left:1006px;top:522px;width:24px;height:32px;"></div>
<div class="arr" style="left:1011px;top:533px;width:14px;height:8px;"></div>
<span class="tl" style="left:802px;top:527px;">白班</span>
<span class="tl" style="left:682px;top:578px;">合计投染</span>
<div class="yel" style="left:796px;top:572px;width:238px;height:40px;"></div>
<span class="v" style="left:803px;top:580px;color:#000">10</span>
<span class="tl" style="left:1060px;top:470px;">投染量</span>
<div class="inp" style="left:1182px;top:464px;width:300px;height:40px;"></div>
<span class="v" style="left:1189px;top:472px;">10</span>
<span class="tl" style="left:1060px;top:525px;">排缸备注</span>
<div class="inp" style="left:1182px;top:518px;width:300px;height:40px;"></div>
<span class="tl" style="left:1060px;top:578px;">剩余投染</span>
<div class="yel" style="left:1182px;top:572px;width:300px;height:40px;"></div>
<span class="v" style="left:1189px;top:580px;color:#000">0</span>
<span class="tl" style="left:1500px;top:578px;">操作时间</span>
<div style="left:1612px;top:570px;width:272px;height:40px;background:#e0e0e0;border:2px solid #6c6c6c"></div>
<div style="left:1854px;top:574px;width:26px;height:32px;background:#f2f2f2"></div>
<div class="arr" style="left:1860px;top:587px;width:14px;height:8px;border-top-color:#8c8c8c"></div>
<span class="v" style="left:1618px;top:577px;color:#a2a6b8;letter-spacing:1.15px">2015/5/19 8:14:45</span>
<div style="left:1494px;top:462px;width:980px;height:40px;background:#ebecf0"></div>
<span class="m" style="left:1499px;top:460px;font-family:'Liberation Serif','Noto Serif CJK SC',serif;font-weight:700;font-size:33px;line-height:40px;height:40px;color:#ff8080;letter-spacing:1.2px">本缸水量：150</span>
<span class="m" style="left:1765px;top:460px;font-family:'Liberation Serif','Noto Serif CJK SC',serif;font-weight:700;font-size:33px;line-height:40px;height:40px;color:#ff8080;letter-spacing:1.2px">缸条数：2</span>
<span class="m" style="left:1961px;top:460px;font-family:'Liberation Serif','Noto Serif CJK SC',serif;font-weight:700;font-size:33px;line-height:40px;height:40px;color:#ff8080;letter-spacing:1.2px">每根可排：5</span>
<span class="m" style="left:2191px;top:460px;font-family:'Liberation Serif','Noto Serif CJK SC',serif;font-weight:700;font-size:33px;line-height:40px;height:40px;color:#ff8080;letter-spacing:1.2px">本缸最大可排：10</span>
<div style="left:1914px;top:521px;width:108px;height:105px;background:#00c000;border:2px solid #fff"></div>
<div style="left:1914px;top:533px;width:108px;height:90px;font-family:'Liberation Serif','Noto Serif CJK SC',serif;font-weight:700;font-size:29px;line-height:36px;color:#fff;text-align:center;letter-spacing:4px;padding-left:4px">确认<br>排缸</div>
<div style="left:2212px;top:521px;width:128px;height:105px;background:#8080ff;border:2px solid #fff"></div>
<div style="left:2212px;top:553px;width:128px;height:36px;font-family:'Liberation Serif','Noto Serif CJK SC',serif;font-weight:700;font-size:26px;line-height:36px;color:#fff;text-align:center;letter-spacing:2px">流程卡</div>
<span class="m" style="left:2358px;top:533px;font-family:'Liberation Serif','Noto Serif CJK SC',serif;font-size:41.5px;line-height:48px;height:48px;color:#ff0000;font-weight:500">未开卡</span>
<span class="m" style="left:109px;top:647px;font-family:'Liberation Serif','Noto Serif CJK SC',serif;font-weight:600;font-size:38px;letter-spacing:3.8px;line-height:48px;height:48px;color:#0000ff">允许最大排缸数：【<span style="position:static;letter-spacing:1.8px">60</span>】，已有【<span style="position:static;letter-spacing:1.8px">1</span>】个数据<span style="position:static;letter-spacing:11.5px">,</span>还可新增缸【<span style="position:static;letter-spacing:1.8px">59</span>】个</span>
<div style="left:2343px;top:643px;width:188px;height:74px;background:#ff8080;border:2px solid #fff"></div>
<div style="left:2343px;top:652px;width:188px;height:50px;font-family:'Liberation Serif','Noto Serif CJK SC',serif;font-weight:bold;font-size:34px;line-height:46px;color:#fff;text-align:center">清空重排</div>
<svg style="left:0px;top:684px" width="14" height="140" viewBox="0 0 14 140"><path d="M3 4L10 10L3 16Z" fill="#a8e4e6" stroke="#16365a" stroke-width="1.6"/><path d="M3 120L10 126L3 132Z" fill="#a8e4e6" stroke="#16365a" stroke-width="1.6"/><rect x="3" y="30" width="4" height="4" fill="#101820"/><rect x="5" y="32" width="3" height="3" fill="#fff"/><rect x="3" y="38" width="4" height="4" fill="#101820"/><rect x="5" y="40" width="3" height="3" fill="#fff"/><rect x="3" y="46" width="4" height="4" fill="#101820"/><rect x="5" y="48" width="3" height="3" fill="#fff"/><rect x="3" y="54" width="4" height="4" fill="#101820"/><rect x="5" y="56" width="3" height="3" fill="#fff"/><rect x="3" y="62" width="4" height="4" fill="#101820"/><rect x="5" y="64" width="3" height="3" fill="#fff"/><rect x="3" y="70" width="4" height="4" fill="#101820"/><rect x="5" y="72" width="3" height="3" fill="#fff"/><rect x="3" y="78" width="4" height="4" fill="#101820"/><rect x="5" y="80" width="3" height="3" fill="#fff"/><rect x="3" y="86" width="4" height="4" fill="#101820"/><rect x="5" y="88" width="3" height="3" fill="#fff"/><rect x="3" y="94" width="4" height="4" fill="#101820"/><rect x="5" y="96" width="3" height="3" fill="#fff"/></svg>
<div style="left:17px;top:726px;width:1855px;height:626px;background:#ebecf0;border-top:2px solid #f4f5f8;border-left:2px solid #f4f5f8"></div>
<div style="left:19px;top:728px;width:1853px;height:38px;background:linear-gradient(#e7e8ec,#e3e4e8)"></div>
<div style="left:19px;top:766px;width:1853px;height:2px;background:#f0f1f4"></div>
<div style="left:17px;top:1348px;width:1855px;height:4px;background:linear-gradient(#c3c5cc,#d0d2d8)"></div>
<div style="left:1868px;top:726px;width:3px;height:626px;background:linear-gradient(90deg,#cbcdd4,#bfc1c9)"></div>
<div style="left:1871px;top:726px;width:1px;height:626px;background:#e4e5ea"></div>
<span class="tl" style="left:40px;top:731.5px;">数据列表</span>
<div class="cb" style="left:170px;top:728px;width:26px;height:26px;"></div>
<span class="tl" style="left:204px;top:730px;color:#0000ff">全选</span>
<div style="left:20px;top:768px;width:1846px;height:580px;background:#fff;border:solid #7d7d7d;border-width:3px 2px 2px 3px"></div>
<div class="hd" style="left:24px;top:772px;width:23px;height:34px;"></div>
<div class="hd" style="left:50px;top:772px;width:96px;height:34px;border-right-width:2px"><span class="ht" style="left:3px;top:2px">选择</span></div>
<div class="hd" style="left:150px;top:772px;width:130px;height:34px;border-right-width:2px"><span class="ht" style="left:3px;top:2px">流程卡标志</span></div>
<div class="hd" style="left:284px;top:772px;width:168px;height:34px;border-right-width:2px"><span class="ht" style="left:3px;top:2px">生产单号</span></div>
<div class="hd" style="left:456px;top:772px;width:110px;height:34px;border-right-width:2px"><span class="ht" style="left:3px;top:2px">出货类型</span></div>
<div class="hd" style="left:570px;top:772px;width:180px;height:34px;border-right-width:2px"><span class="ht" style="left:3px;top:2px">客户单号</span></div>
<div class="hd" style="left:754px;top:772px;width:96px;height:34px;border-right-width:2px"><span class="ht" style="left:3px;top:2px">缸别</span></div>
<div class="hd" style="left:854px;top:772px;width:210px;height:34px;border-right-width:2px"><span class="ht" style="left:3px;top:2px">缸号</span></div>
<div class="hd" style="left:1068px;top:772px;width:96px;height:34px;border-right-width:2px"><span class="ht" style="left:3px;top:2px">班别</span></div>
<div class="hd" style="left:1168px;top:772px;width:194px;height:34px;border-right-width:2px"><span class="ht" style="left:3px;top:2px">纱线编码</span></div>
<div class="hd" style="left:1366px;top:772px;width:283px;height:34px;border-right-width:2px"><span class="ht" style="left:3px;top:2px">纱线名称</span></div>
<div class="hd" style="left:1653px;top:772px;width:178px;height:34px;border-right-width:0px"><span class="ht" style="left:3px;top:2px">纱线规格</span></div>
<div class="hd" style="left:24px;top:808px;width:23px;height:50px;border-bottom-width:2px;border-top-width:2px"></div>
<div style="left:48px;top:806px;width:1783px;height:50px;background:#dcdcdc"></div>
<div style="left:48px;top:856px;width:1783px;height:2px;background:#a2a2a2"></div>
<div style="left:86px;top:820px;width:22px;height:22px;background:#fff;border:2px solid #a8a8a8"></div>
<div style="left:282px;top:806px;width:170px;height:50px;overflow:hidden"><span class="c" style="left:6px;top:12px;letter-spacing:0px">RB15050465</span></div>
<div style="left:454px;top:806px;width:112px;height:50px;overflow:hidden"><span class="c" style="left:6px;top:13px;letter-spacing:0px">筒纱</span></div>
<div style="left:568px;top:806px;width:182px;height:50px;overflow:hidden"><span class="c" style="left:6px;top:12px;letter-spacing:0px">123456</span></div>
<div style="left:752px;top:806px;width:98px;height:50px;overflow:hidden"><span class="c" style="left:6px;top:12px;letter-spacing:0px">P14</span></div>
<div style="left:852px;top:806px;width:212px;height:50px;overflow:hidden"><span class="c" style="left:6px;top:12px;letter-spacing:0.45px">P1415050956</span></div>
<div style="left:1066px;top:806px;width:98px;height:50px;overflow:hidden"><span class="c" style="left:6px;top:13px;letter-spacing:0px">白班</span></div>
<div style="left:1166px;top:806px;width:196px;height:50px;overflow:hidden"><span class="c" style="left:6px;top:12px;letter-spacing:1.1px">097.009</span></div>
<div style="left:1364px;top:806px;width:285px;height:50px;overflow:hidden"><span class="c" style="left:6px;top:12px;letter-spacing:0.4px">RA<span style="position:static;padding:0 1.3px">/</span>C55<span style="position:static;padding:0 1.3px">/</span>45 2<span style="position:static;padding:0 1.3px">/</span>40</span></div>
<div style="left:1651px;top:806px;width:178px;height:50px;overflow:hidden"><span class="c" style="left:6px;top:12px;letter-spacing:0.4px">RA<span style="position:static;padding:0 1.3px">/</span>C55<span style="position:static;padding:0 1.3px">/</span>45 2<span style="position:static;padding:0 1.3px">/</span>40</span></div>
<div class="hd" style="left:24px;top:860px;width:23px;height:50px;border-bottom-width:2px;border-top-width:2px"></div>
<div style="left:48px;top:858px;width:1783px;height:50px;background:#c0ff3e"></div>
<div style="left:48px;top:908px;width:1783px;height:2px;background:#a2a2a2"></div>
<div style="left:86px;top:872px;width:22px;height:22px;background:#fff;border:2px solid #a8a8a8"></div>
<div style="left:282px;top:858px;width:170px;height:50px;overflow:hidden"><span class="c" style="left:6px;top:12px;letter-spacing:0px">RB15050464</span></div>
<div style="left:454px;top:858px;width:112px;height:50px;overflow:hidden"><span class="c" style="left:6px;top:13px;letter-spacing:0px">筒纱</span></div>
<div style="left:568px;top:858px;width:182px;height:50px;overflow:hidden"><span class="c" style="left:6px;top:12px;letter-spacing:0px">RB15050464</span></div>
<div style="left:752px;top:858px;width:98px;height:50px;overflow:hidden"><span class="c" style="left:6px;top:12px;letter-spacing:0px">L02</span></div>
<div style="left:852px;top:858px;width:212px;height:50px;overflow:hidden"><span class="c" style="left:6px;top:12px;letter-spacing:0.45px">L0218070001</span></div>
<div style="left:1066px;top:858px;width:98px;height:50px;overflow:hidden"><span class="c" style="left:6px;top:13px;letter-spacing:0px">白班</span></div>
<div style="left:1166px;top:858px;width:196px;height:50px;overflow:hidden"><span class="c" style="left:6px;top:12px;letter-spacing:1.1px">118.007(2/32)</span></div>
<div style="left:1364px;top:858px;width:285px;height:50px;overflow:hidden"><span class="c" style="left:6px;top:12px;letter-spacing:0.4px">60棉 30尼龙 10羊毛</span></div>
<div style="left:1651px;top:858px;width:178px;height:50px;overflow:hidden"><span class="c" style="left:6px;top:12px;letter-spacing:0.4px">60棉 30尼龙 10羊毛</span></div>
<div class="hd" style="left:24px;top:912px;width:23px;height:50px;border-bottom-width:2px;border-top-width:2px"></div>
<div style="left:48px;top:910px;width:1783px;height:50px;background:#c0ff3e"></div>
<div style="left:48px;top:960px;width:1783px;height:2px;background:#a2a2a2"></div>
<div style="left:86px;top:924px;width:22px;height:22px;background:#fff;border:2px solid #a8a8a8"></div>
<div style="left:282px;top:910px;width:170px;height:50px;overflow:hidden"><span class="c" style="left:6px;top:12px;letter-spacing:0px">RB15050463</span></div>
<div style="left:454px;top:910px;width:112px;height:50px;overflow:hidden"><span class="c" style="left:6px;top:13px;letter-spacing:0px">绞纱</span></div>
<div style="left:568px;top:910px;width:182px;height:50px;overflow:hidden"><span class="c" style="left:6px;top:12px;letter-spacing:0px">0001263</span></div>
<div style="left:752px;top:910px;width:98px;height:50px;overflow:hidden"><span class="c" style="left:6px;top:12px;letter-spacing:0px">P02</span></div>
<div style="left:852px;top:910px;width:212px;height:50px;overflow:hidden"><span class="c" style="left:6px;top:12px;letter-spacing:0.45px">P0215050968</span></div>
<div style="left:1066px;top:910px;width:98px;height:50px;overflow:hidden"><span class="c" style="left:6px;top:13px;letter-spacing:0px">白班</span></div>
<div style="left:1166px;top:910px;width:196px;height:50px;overflow:hidden"><span class="c" style="left:6px;top:12px;letter-spacing:1.1px">003.020(2/50)</span></div>
<div style="left:1364px;top:910px;width:285px;height:50px;overflow:hidden"><span class="c" style="left:6px;top:12px;letter-spacing:0.4px">FW-181</span></div>
<div style="left:1651px;top:910px;width:178px;height:50px;overflow:hidden"><span class="c" style="left:6px;top:12px;letter-spacing:0.4px">MD<span style="position:static;padding:0 1.3px">/</span>A<span style="position:static;padding:0 1.3px">/</span>W50<span style="position:static;padding:0 1.3px">/</span>45<span style="position:static;padding:0 1.3px">/</span>5</span></div>
<div class="hd" style="left:24px;top:964px;width:23px;height:50px;border-bottom-width:2px;border-top-width:2px"></div>
<div style="left:48px;top:962px;width:1783px;height:50px;background:#c0ff3e"></div>
<div style="left:48px;top:1012px;width:1783px;height:2px;background:#a2a2a2"></div>
<div style="left:86px;top:976px;width:22px;height:22px;background:#fff;border:2px solid #a8a8a8"></div>
<div style="left:282px;top:962px;width:170px;height:50px;overflow:hidden"><span class="c" style="left:6px;top:12px;letter-spacing:0px">RB15050463</span></div>
<div style="left:454px;top:962px;width:112px;height:50px;overflow:hidden"><span class="c" style="left:6px;top:13px;letter-spacing:0px">绞纱</span></div>
<div style="left:568px;top:962px;width:182px;height:50px;overflow:hidden"><span class="c" style="left:6px;top:12px;letter-spacing:0px">0001263</span></div>
<div style="left:752px;top:962px;width:98px;height:50px;overflow:hidden"><span class="c" style="left:6px;top:12px;letter-spacing:0px">L01</span></div>
<div style="left:852px;top:962px;width:212px;height:50px;overflow:hidden"><span class="c" style="left:6px;top:12px;letter-spacing:0.45px">L0115060002</span></div>
<div style="left:1066px;top:962px;width:98px;height:50px;overflow:hidden"><span class="c" style="left:6px;top:13px;letter-spacing:0px">白班</span></div>
<div style="left:1166px;top:962px;width:196px;height:50px;overflow:hidden"><span class="c" style="left:6px;top:12px;letter-spacing:1.1px">003.020(2/50)</span></div>
<div style="left:1364px;top:962px;width:285px;height:50px;overflow:hidden"><span class="c" style="left:6px;top:12px;letter-spacing:0.4px">FW-181</span></div>
<div style="left:1651px;top:962px;width:178px;height:50px;overflow:hidden"><span class="c" style="left:6px;top:12px;letter-spacing:0.4px">MD<span style="position:static;padding:0 1.3px">/</span>A<span style="position:static;padding:0 1.3px">/</span>W50<span style="position:static;padding:0 1.3px">/</span>45<span style="position:static;padding:0 1.3px">/</span>5</span></div>
<div class="hd" style="left:24px;top:1016px;width:23px;height:50px;border-bottom-width:2px;border-top-width:2px"></div>
<div style="left:48px;top:1014px;width:1783px;height:50px;background:#ffffff"></div>
<div style="left:48px;top:1064px;width:1783px;height:2px;background:#a2a2a2"></div>
<div style="left:86px;top:1028px;width:22px;height:22px;background:#fff;border:2px solid #a8a8a8"></div>
<div style="left:282px;top:1014px;width:170px;height:50px;overflow:hidden"><span class="c" style="left:6px;top:12px;letter-spacing:0px">RB15050463</span></div>
<div style="left:454px;top:1014px;width:112px;height:50px;overflow:hidden"><span class="c" style="left:6px;top:13px;letter-spacing:0px">绞纱</span></div>
<div style="left:568px;top:1014px;width:182px;height:50px;overflow:hidden"><span class="c" style="left:6px;top:12px;letter-spacing:0px">0001263</span></div>
<div style="left:852px;top:1014px;width:212px;height:50px;overflow:hidden"><span class="c" style="left:6px;top:12px;letter-spacing:0.45px">P0215050969A</span></div>
<div style="left:1166px;top:1014px;width:196px;height:50px;overflow:hidden"><span class="c" style="left:6px;top:12px;letter-spacing:1.1px">003.020(2/50)</span></div>
<div style="left:1364px;top:1014px;width:285px;height:50px;overflow:hidden"><span class="c" style="left:6px;top:12px;letter-spacing:0.4px">FW-181</span></div>
<div style="left:1651px;top:1014px;width:178px;height:50px;overflow:hidden"><span class="c" style="left:6px;top:12px;letter-spacing:0.4px">MD<span style="position:static;padding:0 1.3px">/</span>A<span style="position:static;padding:0 1.3px">/</span>W50<span style="position:static;padding:0 1.3px">/</span>45<span style="position:static;padding:0 1.3px">/</span>5</span></div>
<div class="hd" style="left:24px;top:1068px;width:23px;height:50px;border-bottom-width:2px;border-top-width:2px"></div>
<div style="left:48px;top:1066px;width:1783px;height:50px;background:#c0ff3e"></div>
<div style="left:48px;top:1116px;width:1783px;height:2px;background:#a2a2a2"></div>
<div style="left:86px;top:1080px;width:22px;height:22px;background:#fff;border:2px solid #a8a8a8"></div>
<div style="left:282px;top:1066px;width:170px;height:50px;overflow:hidden"><span class="c" style="left:6px;top:12px;letter-spacing:0px">RB15050462</span></div>
<div style="left:454px;top:1066px;width:112px;height:50px;overflow:hidden"><span class="c" style="left:6px;top:13px;letter-spacing:0px">绞纱</span></div>
<div style="left:568px;top:1066px;width:182px;height:50px;overflow:hidden"><span class="c" style="left:6px;top:12px;letter-spacing:0px">2015120-1</span></div>
<div style="left:752px;top:1066px;width:98px;height:50px;overflow:hidden"><span class="c" style="left:6px;top:12px;letter-spacing:0px">P08</span></div>
<div style="left:852px;top:1066px;width:212px;height:50px;overflow:hidden"><span class="c" style="left:6px;top:12px;letter-spacing:0.45px">P0815050970</span></div>
<div style="left:1066px;top:1066px;width:98px;height:50px;overflow:hidden"><span class="c" style="left:6px;top:13px;letter-spacing:0px">白班</span></div>
<div style="left:1166px;top:1066px;width:196px;height:50px;overflow:hidden"><span class="c" style="left:6px;top:12px;letter-spacing:1.1px">007.262(1/26)</span></div>
<div style="left:1364px;top:1066px;width:285px;height:50px;overflow:hidden"><span class="c" style="left:6px;top:12px;letter-spacing:0.4px">56W 22R  22N</span></div>
<div style="left:1651px;top:1066px;width:178px;height:50px;overflow:hidden"><span class="c" style="left:6px;top:12px;letter-spacing:0.4px">56W 22R  22N</span></div>
<div class="hd" style="left:24px;top:1120px;width:23px;height:50px;border-bottom-width:2px;border-top-width:2px"></div>
<div style="left:48px;top:1118px;width:1783px;height:50px;background:#c0ff3e"></div>
<div style="left:48px;top:1168px;width:1783px;height:2px;background:#a2a2a2"></div>
<div style="left:86px;top:1132px;width:22px;height:22px;background:#fff;border:2px solid #a8a8a8"></div>
<div style="left:282px;top:1118px;width:170px;height:50px;overflow:hidden"><span class="c" style="left:6px;top:12px;letter-spacing:0px">RB15050461</span></div>
<div style="left:454px;top:1118px;width:112px;height:50px;overflow:hidden"><span class="c" style="left:6px;top:13px;letter-spacing:0px">绞纱</span></div>
<div style="left:568px;top:1118px;width:182px;height:50px;overflow:hidden"><span class="c" style="left:6px;top:12px;letter-spacing:0px">0014150</span></div>
<div style="left:752px;top:1118px;width:98px;height:50px;overflow:hidden"><span class="c" style="left:6px;top:12px;letter-spacing:0px">L16</span></div>
<div style="left:852px;top:1118px;width:212px;height:50px;overflow:hidden"><span class="c" style="left:6px;top:12px;letter-spacing:0.45px">L1615050971</span></div>
<div style="left:1066px;top:1118px;width:98px;height:50px;overflow:hidden"><span class="c" style="left:6px;top:13px;letter-spacing:0px">白班</span></div>
<div style="left:1166px;top:1118px;width:196px;height:50px;overflow:hidden"><span class="c" style="left:6px;top:12px;letter-spacing:1.1px">082.033(1/16)</span></div>
<div style="left:1364px;top:1118px;width:285px;height:50px;overflow:hidden"><span class="c" style="left:6px;top:12px;letter-spacing:0.4px">Z-3066</span></div>
<div style="left:1651px;top:1118px;width:178px;height:50px;overflow:hidden"><span class="c" style="left:6px;top:12px;letter-spacing:0.4px">N<span style="position:static;padding:0 1.3px">/</span>W<span style="position:static;padding:0 1.3px">/</span>A 40<span style="position:static;padding:0 1.3px">/</span>12<span style="position:static;padding:0 1.3px">/</span>48</span></div>
<div class="hd" style="left:24px;top:1172px;width:23px;height:50px;border-bottom-width:2px;border-top-width:2px"></div>
<div style="left:48px;top:1170px;width:1783px;height:50px;background:#c0ff3e"></div>
<div style="left:48px;top:1220px;width:1783px;height:2px;background:#a2a2a2"></div>
<div style="left:86px;top:1184px;width:22px;height:22px;background:#fff;border:2px solid #a8a8a8"></div>
<div style="left:282px;top:1170px;width:170px;height:50px;overflow:hidden"><span class="c" style="left:6px;top:12px;letter-spacing:0px">RB15050461</span></div>
<div style="left:454px;top:1170px;width:112px;height:50px;overflow:hidden"><span class="c" style="left:6px;top:13px;letter-spacing:0px">绞纱</span></div>
<div style="left:568px;top:1170px;width:182px;height:50px;overflow:hidden"><span class="c" style="left:6px;top:12px;letter-spacing:0px">0014150</span></div>
<div style="left:752px;top:1170px;width:98px;height:50px;overflow:hidden"><span class="c" style="left:6px;top:12px;letter-spacing:0px">L17</span></div>
<div style="left:852px;top:1170px;width:212px;height:50px;overflow:hidden"><span class="c" style="left:6px;top:12px;letter-spacing:0.45px">L1715050972</span></div>
<div style="left:1066px;top:1170px;width:98px;height:50px;overflow:hidden"><span class="c" style="left:6px;top:13px;letter-spacing:0px">白班</span></div>
<div style="left:1166px;top:1170px;width:196px;height:50px;overflow:hidden"><span class="c" style="left:6px;top:12px;letter-spacing:1.1px">082.033(1/16)</span></div>
<div style="left:1364px;top:1170px;width:285px;height:50px;overflow:hidden"><span class="c" style="left:6px;top:12px;letter-spacing:0.4px">Z-3066</span></div>
<div style="left:1651px;top:1170px;width:178px;height:50px;overflow:hidden"><span class="c" style="left:6px;top:12px;letter-spacing:0.4px">N<span style="position:static;padding:0 1.3px">/</span>W<span style="position:static;padding:0 1.3px">/</span>A 40<span style="position:static;padding:0 1.3px">/</span>12<span style="position:static;padding:0 1.3px">/</span>48</span></div>
<div class="hd" style="left:24px;top:1224px;width:23px;height:46px;border-bottom-width:2px;border-top-width:2px"></div>
<div style="left:48px;top:1222px;width:1783px;height:46px;background:#c0ff3e"></div>
<div style="left:86px;top:1236px;width:22px;height:22px;background:#fff;border:2px solid #a8a8a8"></div>
<div style="left:282px;top:1222px;width:170px;height:46px;overflow:hidden"><span class="c" style="left:6px;top:12px;letter-spacing:0px">RB15050461</span></div>
<div style="left:454px;top:1222px;width:112px;height:46px;overflow:hidden"><span class="c" style="left:6px;top:13px;letter-spacing:0px">绞纱</span></div>
<div style="left:568px;top:1222px;width:182px;height:46px;overflow:hidden"><span class="c" style="left:6px;top:12px;letter-spacing:0px">0014150</span></div>
<div style="left:752px;top:1222px;width:98px;height:46px;overflow:hidden"><span class="c" style="left:6px;top:12px;letter-spacing:0px">L01</span></div>
<div style="left:852px;top:1222px;width:212px;height:46px;overflow:hidden"><span class="c" style="left:6px;top:12px;letter-spacing:0.45px">L0115060001</span></div>
<div style="left:1066px;top:1222px;width:98px;height:46px;overflow:hidden"><span class="c" style="left:6px;top:13px;letter-spacing:0px">白班</span></div>
<div style="left:1166px;top:1222px;width:196px;height:46px;overflow:hidden"><span class="c" style="left:6px;top:12px;letter-spacing:1.1px">082.033(1/16)</span></div>
<div style="left:1364px;top:1222px;width:285px;height:46px;overflow:hidden"><span class="c" style="left:6px;top:12px;letter-spacing:0.4px">Z-3066</span></div>
<div style="left:1651px;top:1222px;width:178px;height:46px;overflow:hidden"><span class="c" style="left:6px;top:12px;letter-spacing:0.4px">N<span style="position:static;padding:0 1.3px">/</span>W<span style="position:static;padding:0 1.3px">/</span>A 40<span style="position:static;padding:0 1.3px">/</span>12<span style="position:static;padding:0 1.3px">/</span>48</span></div>
<div style="left:146px;top:806px;width:2px;height:462px;background:#a2a2a2"></div>
<div style="left:280px;top:806px;width:2px;height:462px;background:#a2a2a2"></div>
<div style="left:452px;top:806px;width:2px;height:462px;background:#a2a2a2"></div>
<div style="left:566px;top:806px;width:2px;height:462px;background:#a2a2a2"></div>
<div style="left:750px;top:806px;width:2px;height:462px;background:#a2a2a2"></div>
<div style="left:850px;top:806px;width:2px;height:462px;background:#a2a2a2"></div>
<div style="left:1064px;top:806px;width:2px;height:462px;background:#a2a2a2"></div>
<div style="left:1164px;top:806px;width:2px;height:462px;background:#a2a2a2"></div>
<div style="left:1362px;top:806px;width:2px;height:462px;background:#a2a2a2"></div>
<div style="left:1649px;top:806px;width:2px;height:462px;background:#a2a2a2"></div>
<svg style="left:31px;top:822px" width="12" height="20" viewBox="0 0 12 20"><path d="M1 1L11 10L1 19Z" fill="#000"/></svg>
<div style="left:23px;top:1270px;width:1807px;height:42px;background:#f0f0f0;border:2px solid #6e6e6e;border-left:0"></div>
<div style="left:284px;top:1274px;width:168px;height:34px;background:#f0f0f0;border:2px solid #6e6e6e"></div>
<span class="c" style="left:284px;top:1277px;width:163px;text-align:right;color:#10103a">8004</span>
<div style="left:1831px;top:771px;width:33px;height:541px;background-color:#fff;background-image:linear-gradient(45deg,#ececec 25%,transparent 25%,transparent 75%,#ececec 75%),linear-gradient(45deg,#ececec 25%,transparent 25%,transparent 75%,#ececec 75%);background-size:4px 4px;background-position:0 0,2px 2px"></div>
<div style="left:1830px;top:770px;width:34px;height:34px;background:#f0f0f0;border:2px solid #000"></div>
<div class="arr" style="left:1840px;top:783px;width:14px;height:8px;border-top:0;border-bottom:8px solid #000"></div>
<div style="left:1830px;top:802px;width:34px;height:36px;background:#f0f0f0;border:2px solid #000"></div>
<div style="left:1830px;top:1278px;width:34px;height:34px;background:#f0f0f0;border:2px solid #000"></div>
<div class="arr" style="left:1840px;top:1292px;width:14px;height:8px;"></div>
<div style="left:23px;top:1312px;width:1808px;height:34px;background-color:#fff;background-image:linear-gradient(45deg,#ececec 25%,transparent 25%,transparent 75%,#ececec 75%),linear-gradient(45deg,#ececec 25%,transparent 25%,transparent 75%,#ececec 75%);background-size:4px 4px;background-position:0 0,2px 2px"></div>
<div style="left:22px;top:1312px;width:35px;height:34px;background:#f0f0f0;border:2px solid #000"></div>
<svg style="left:33px;top:1321px" width="10" height="16" viewBox="0 0 10 16"><path d="M9 0L0 8L9 16Z" fill="#000"/></svg>
<div style="left:55px;top:1312px;width:591px;height:34px;background:#f0f0f0;border:2px solid #000"></div>
<div style="left:1796px;top:1312px;width:35px;height:34px;background:#f0f0f0;border:2px solid #000"></div>
<svg style="left:1809px;top:1321px" width="10" height="16" viewBox="0 0 10 16"><path d="M0 0L9 8L0 16Z" fill="#000"/></svg>
<div style="left:1831px;top:1312px;width:33px;height:34px;background:#ececf0"></div>
<div style="left:1872px;top:726px;width:685px;height:626px;background:#ebecf0;border-top:2px solid #f4f5f8;border-left:2px solid #f4f5f8"></div>
<div style="left:1874px;top:728px;width:683px;height:38px;background:linear-gradient(#e7e8ec,#e3e4e8)"></div>
<div style="left:1874px;top:766px;width:683px;height:2px;background:#f0f1f4"></div>
<div style="left:1872px;top:1348px;width:685px;height:4px;background:linear-gradient(#c3c5cc,#d0d2d8)"></div>
<div style="left:2553px;top:726px;width:3px;height:626px;background:linear-gradient(90deg,#cbcdd4,#bfc1c9)"></div>
<div style="left:2556px;top:726px;width:1px;height:626px;background:#e4e5ea"></div>
<span class="tl" style="left:1894px;top:733px;">原料信息</span>
<div style="left:1875px;top:768px;width:677px;height:135px;background:#ebecf0;border:2px solid #d3d5dc;border-radius:5px"></div>
<div style="left:1877px;top:770px;width:673px;height:38px;background:linear-gradient(#e8e9ed,#e3e4e8)"></div>
<div style="left:1875px;top:900px;width:677px;height:3px;background:#c6c8cf"></div>
<span class="tl" style="left:1898px;top:777px;color:#3a3a44">排缸原料列表</span>
<div style="left:1878px;top:812px;width:670px;height:88px;background:#fff;border:3px solid #757575"></div>
<div class="hd" style="left:1882px;top:816px;width:58px;height:35px;"></div>
<div class="hd" style="left:1942px;top:816px;width:214px;height:35px;"><span class="ht" style="left:3px;top:2px">批号</span></div>
<div class="hd" style="left:2158px;top:816px;width:196px;height:35px;"><span class="ht" style="left:3px;top:2px">数量</span></div>
<div class="hd" style="left:2356px;top:816px;width:190px;height:35px;"></div>
<div style="left:1940px;top:850px;width:414px;height:5px;background:#6495ed"></div>
<div style="left:1881px;top:857px;width:665px;height:41px;background:#f0f0f0;border:2px solid #6e6e6e"></div>
<div style="left:1875px;top:904px;width:677px;height:446px;background:#ebecf0;border:2px solid #d3d5dc;border-radius:5px"></div>
<div style="left:1877px;top:906px;width:673px;height:38px;background:linear-gradient(#e8e9ed,#e3e4e8)"></div>
<div style="left:1875px;top:1347px;width:677px;height:3px;background:#c6c8cf"></div>
<span class="tl" style="left:1898px;top:912.5px;color:#3a3a44">订单原料列表</span>
<div style="left:1878px;top:948px;width:670px;height:398px;background:#fff;border:3px solid #757575"></div>
<div class="hd" style="left:1882px;top:952px;width:58px;height:34px;"></div>
<div class="hd" style="left:1942px;top:952px;width:219px;height:34px;"><span class="ht" style="left:3px;top:2px">批号</span></div>
<div class="hd" style="left:2164px;top:952px;width:181px;height:34px;"><span class="ht" style="left:3px;top:2px">数量</span></div>
<div class="hd" style="left:2348px;top:952px;width:148px;height:34px;"><span class="ht" style="left:3px;top:2px">未排缸数量</span></div>
<div class="hd" style="left:2498px;top:952px;width:48px;height:34px;border-right:0"></div>
<div class="hd" style="left:1882px;top:986px;width:58px;height:38px;"></div>
<svg style="left:1889px;top:996px" width="12" height="20" viewBox="0 0 12 20"><path d="M1 1L10 10L1 19Z" fill="#000"/></svg>
<span class="c" style="left:1908px;top:993px;">1</span>
<div style="left:1940px;top:986px;width:556px;height:38px;background:#6495ed"></div>
<div style="left:2160px;top:986px;width:3px;height:38px;background:#8a93a6"></div>
<div style="left:2345px;top:986px;width:3px;height:38px;background:#8a93a6"></div>
<div style="left:1940px;top:1022px;width:556px;height:2px;background:#8a93a6"></div>
<span class="c" style="left:1947px;top:991px;color:#08082a;letter-spacing:0.2px">150518-B</span>
<div style="left:2132px;top:990px;width:24px;height:28px;background:#fff"></div>
<div class="arr" style="left:2137px;top:1001px;width:14px;height:8px;"></div>
<span class="c" style="left:2164px;top:991px;width:175px;text-align:right;color:#08082a">10</span>
<span class="c" style="left:2348px;top:991px;width:141px;text-align:right;color:#08082a">0</span>
<div style="left:1881px;top:1301px;width:665px;height:42px;background:#f0f0f0;border:2px solid #6e6e6e"></div>
<div style="left:17px;top:1352px;width:2541px;height:52px;background:#e6e6fa"></div>
<div class="lg" style="left:28px;top:1368px;width:81px;height:28px;background:#ffb6c1">未审单</div>
<div class="lg" style="left:110px;top:1368px;width:64px;height:28px;background:#fff">订单</div>
<div class="lg" style="left:176px;top:1368px;width:100px;height:28px;background:#c0ff3e">排缸</div>
<div class="lg" style="left:278px;top:1368px;width:96px;height:28px;background:#40e0d0">备纱</div>
<div class="lg" style="left:376px;top:1368px;width:136px;height:28px;background:#f4a460">染色进缸</div>
<div class="lg" style="left:516px;top:1368px;width:134px;height:28px;background:#dcdcdc">染色出缸</div>
<div class="lg" style="left:654px;top:1368px;width:133px;height:28px;background:#ffa500">脱水</div>
<div class="lg" style="left:792px;top:1368px;width:134px;height:28px;background:#ffff00">烘干</div>
<div class="lg" style="left:930px;top:1368px;width:134px;height:28px;background:#ff88f8">检验</div>
<div class="lg" style="left:1070px;top:1368px;width:152px;height:28px;background:#0080ff">包装</div>
<div class="lg" style="left:1230px;top:1368px;width:152px;height:28px;background:#f05030">入库</div>
<div class="lg" style="left:1384px;top:1368px;width:152px;height:28px;background:#ff8000">销货</div>
<div class="lg" style="left:1716px;top:1368px;width:70px;height:28px;background:#c0c0c0">撤单</div>
<div class="lg" style="left:1808px;top:1368px;width:60px;height:28px;background:#fff">接样</div>
<div class="lg" style="left:1868px;top:1368px;width:64px;height:28px;background:#ffff80">分样</div>
<div class="lg" style="left:1934px;top:1368px;width:84px;height:28px;background:#f4a0e8">送样</div>
<div class="lg" style="left:2020px;top:1368px;width:80px;height:28px;background:#8080ff">重打</div>
<div class="lg" style="left:2104px;top:1368px;width:70px;height:28px;background:#ff8000;font-family:'Liberation Mono',monospace">OK</div>
<div style="left:0px;top:1408px;width:2558px;height:39px;background:linear-gradient(90deg,#27a063 0%,#27a063 12%,#259c80 30%,#2190b4 48%,#2190b4 52%,#259c80 70%,#27a063 86%,#27a063 100%)"></div>
<div style="left:0px;top:1408px;width:2558px;height:2px;background:rgba(255,255,255,.55)"></div>
<div style="left:0px;top:1444px;width:2558px;height:3px;background:rgba(255,255,255,.35)"></div>
<div style="left:0px;top:1447px;width:2558px;height:5px;background:linear-gradient(90deg,#2a1840,#3a2250 30%,#201838 60%,#1a1a30)"></div>
<span class="st" style="left:4px;top:1413px;">版本：<span style="position:static;font-size:23px;letter-spacing:-1.8px">V2.3</span></span>
<span class="st" style="left:164px;top:1413px;">服务器：<span style="position:static;font-size:23px;letter-spacing:-1.8px">...YR-HX</span></span>
<span class="st" style="left:961px;top:1413px;"><span style="position:static;font-size:23px;letter-spacing:-1.8px">2006-2018</span></span>
<span class="st" style="left:1087px;top:1413px;">版权所有</span>
<span class="st" style="left:1206px;top:1413px;">苏州工业园区恒泰科技有限公司</span>
<span class="st" style="left:1977px;top:1413px;">操作员：<span style="position:static;font-size:23px;letter-spacing:-1.8px">AAAAA(</span>恒泰<span style="position:static;font-size:23px;letter-spacing:-1.8px">)</span></span>
<span class="st" style="left:2239px;top:1413px;">登录时间：<span style="position:static;font-size:23px;letter-spacing:-1.8px">2018-10-30 04:41</span></span>
</body></html>
